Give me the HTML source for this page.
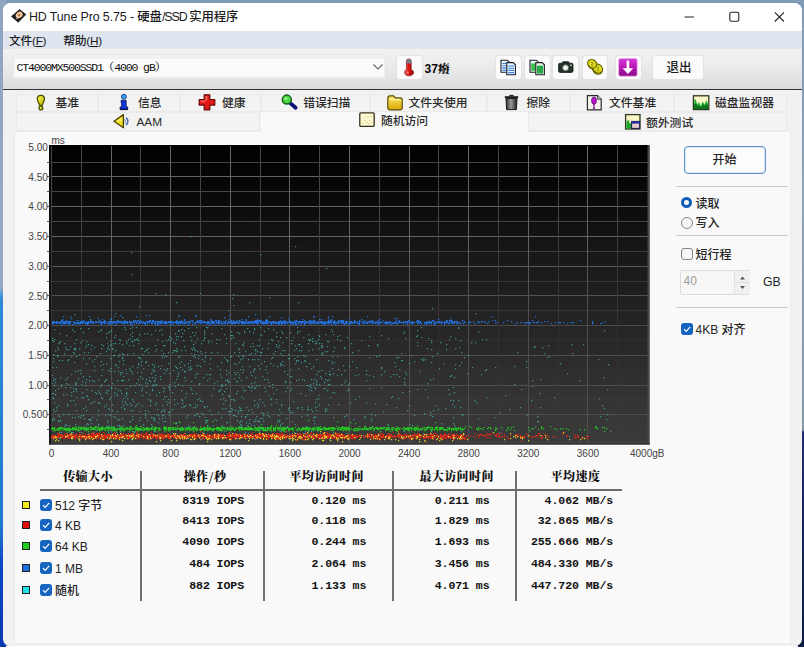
<!DOCTYPE html>
<html lang="zh-CN">
<head>
<meta charset="utf-8">
<title>HD Tune Pro 5.75 - 硬盘/SSD 实用程序</title>
<style>
html,body{margin:0;padding:0;}
body{width:804px;height:665px;overflow:hidden;background:#fff;position:relative;
 font-family:"Liberation Sans","Noto Sans CJK SC",sans-serif;font-size:12px;color:#1a1a1a;line-height:16px;font-weight:500;}
.abs{position:absolute;}
#desk{left:0;top:0;width:804px;height:646px;
 background:linear-gradient(to right,#8fa6bf 0,#8fa6bf 100%);}
#deskL{left:0;top:0;width:6px;height:646.5px;
 background:linear-gradient(to bottom,#8ea6c0 0,#93a9c0 288px,#5a9fdc 293px,#3088d8 299px,#2580d2 420px,#1e78cc 525px,#1660c8 545px,#0c48c4 562px,#0838b0 646px);}
#deskR{left:798px;top:0;width:6px;height:646.5px;
 background:linear-gradient(to bottom,#7f9bb5 0,#8aa2ba 200px,#8496aa 430px,#1e2e70 432px,#16245c 520px,#0c1a44 646px);}
#deskT{left:0;top:0;width:804px;height:8px;background:#7f9bb6;}
#win{left:3px;top:2.5px;width:798.6px;height:643.8px;background:#f1f1f2;border-radius:8px 8px 7px 7px;overflow:hidden;}
#title{left:0;top:0;width:799px;height:29px;background:#fff;}
#title .t{left:26px;top:6.4px;font-size:12.4px;color:#1b1b1b;white-space:nowrap;letter-spacing:-0.1px;}
#menu{left:0;top:28.8px;width:799px;height:18.2px;background:#dfe5ee;}
#menu span{position:absolute;top:1.3px;font-size:11.8px;letter-spacing:-0.3px;white-space:nowrap;color:#1b1b1b;}
#tool{left:0;top:46.8px;width:799px;height:39.7px;background:linear-gradient(to bottom,#f1f1f1 0,#ececec 40%,#dcdcdc 100%);}
#tline{left:0;top:86.1px;width:799px;height:1.4px;background:#333;}
.tbtn{position:absolute;top:7.2px;height:23px;width:24.5px;background:#fbfbfb;border-radius:3px;box-shadow:0 0 0 1px #e3e3e3;}
#combo{left:9.5px;top:6.2px;width:372px;height:22.5px;background:#f1f1f1;border-radius:3px;box-shadow:0 0 0 1px #e6e6e6;}
.mono{font-family:"Liberation Mono","Noto Serif CJK SC",monospace;}
.tab{position:absolute;height:18.5px;background:#f3f3f3;box-shadow:inset 0 0 0 1px #eaeaea;}
.tab span{position:absolute;top:1.6px;font-size:11.8px;white-space:nowrap;color:#2a2a2a;}
#page{left:11.8px;top:129px;width:775.2px;height:511px;background:#f9f9f9;box-shadow:0 0 0 1px #ececec;}
.lbl{position:absolute;font-size:12px;white-space:nowrap;color:#242424;}
.cb{position:absolute;width:12px;height:12px;border-radius:3px;background:#1565c0;}
.cb svg{position:absolute;left:0;top:0;}
.sq{position:absolute;width:6px;height:6px;border:1px solid #222;}
.hd{position:absolute;font-family:"Noto Serif CJK SC","Noto Sans CJK SC",serif;font-weight:900;font-size:12px;letter-spacing:0.4px;white-space:nowrap;color:#111;transform:translateX(-50%);}
.val{position:absolute;font-family:"Liberation Mono",monospace;font-weight:bold;font-size:11.6px;letter-spacing:-0.11px;white-space:pre;color:#111;text-align:right;width:120px;}
.sep{position:absolute;height:1px;background:#c9c9c9;left:676px;width:112px;}
</style>
</head>
<body>
<div id="desk" class="abs"></div>
<div id="deskT" class="abs"></div>
<div id="deskL" class="abs"></div>
<div id="deskR" class="abs"></div>
<div id="win" class="abs">
  <div id="title" class="abs">
    <div class="t abs">HD Tune Pro 5.75 - 硬盘<span style="letter-spacing:-1px">/SSD </span>实用程序</div>
    <svg class="abs" style="left:670px;top:-0.8px" width="129" height="30" viewBox="0 0 129 30">
      <path d="M11.5 15H21" stroke="#222" stroke-width="1.1" fill="none"/>
      <rect x="56.8" y="10.3" width="9" height="9" rx="1.6" fill="none" stroke="#222" stroke-width="1.1"/>
      <path d="M101.8 10.3L111 19.5M111 10.3L101.8 19.5" stroke="#222" stroke-width="1.1" fill="none"/>
    </svg>
  </div>
  <div id="menu" class="abs"><span style="left:6px">文件(<u>F</u>)</span><span style="left:60.3px">帮助(<u>H</u>)</span></div>
  <div id="tool" class="abs">
    <div id="combo" class="abs"><div class="abs" style="left:2px;top:3.5px;width:369px;height:17px;background:#fbfbfb"></div><span class="mono abs" style="left:3.9px;top:4.6px;font-size:11.5px;letter-spacing:-1.14px;color:#111;white-space:pre">CT4000MX500SSD1<span style="letter-spacing:0">（</span>4000 gB<span style="letter-spacing:0">）</span></span>
      <svg class="abs" style="left:359px;top:8px" width="12" height="8" viewBox="0 0 12 8"><path d="M1.5 1.5L6 6L10.5 1.5" fill="none" stroke="#666" stroke-width="1.1"/></svg>
    </div>
    <div class="tbtn" style="left:394px"></div>
    <div class="abs" style="left:421.5px;top:12.2px;font-weight:bold;font-size:12.2px;line-height:14px;white-space:nowrap;font-family:'Liberation Sans','Noto Serif CJK SC',sans-serif;color:#0c0c0c">37<span style="font-size:11.6px;font-weight:900;font-family:'Noto Serif CJK SC',serif">癈</span></div>
    <div class="tbtn" style="left:493px"></div>
    <div class="tbtn" style="left:522px"></div>
    <div class="tbtn" style="left:550.3px"></div>
    <div class="tbtn" style="left:579.5px"></div>
    <div class="tbtn" style="left:613px"></div>
    <div class="tbtn" style="left:650px;width:50px"><span class="abs" style="left:13.5px;top:4px;font-size:12.5px;white-space:nowrap">退出</span></div>
  </div>
  <div id="tline" class="abs"></div>
  <!-- tabs row 1 -->
  <div class="tab" style="left:13.2px;top:91px;width:81.8px"><span style="left:39.3px">基准</span></div>
  <div class="tab" style="left:95px;top:91px;width:81.5px"><span style="left:40px">信息</span></div>
  <div class="tab" style="left:176.5px;top:91px;width:81px"><span style="left:42.5px">健康</span></div>
  <div class="tab" style="left:257.5px;top:91px;width:109px"><span style="left:42.7px">错误扫描</span></div>
  <div class="tab" style="left:366.5px;top:91px;width:117px"><span style="left:39px">文件夹使用</span></div>
  <div class="tab" style="left:483.5px;top:91px;width:83.5px"><span style="left:40px">擦除</span></div>
  <div class="tab" style="left:567px;top:91px;width:104px"><span style="left:39px">文件基准</span></div>
  <div class="tab" style="left:671px;top:91px;width:113px"><span style="left:41px">磁盘监视器</span></div>
  <!-- tabs row 2 -->
  <div class="tab" style="left:13.2px;top:109.5px;width:244.3px;height:19px"><span style="left:120.3px;top:1.6px">AAM</span></div>
  <div class="tab" style="left:524.5px;top:109.5px;width:259.5px;height:19px"><span style="left:118.5px;top:3.1px">额外测试</span></div>
  <div id="page" class="abs"></div>
  <div class="tab" style="left:257.5px;top:109.5px;width:267px;height:21px;background:#f9f9f9;box-shadow:none"><span style="left:120.4px;top:0.9px">随机访问</span></div>
</div>
<svg class="abs" style="left:10px;top:8px" width="18" height="16" viewBox="0 0 18 16">
 <path d="M1.6 8.4L9.6 1.6L15.8 6.6L8.2 14.2Z" fill="#1c1c1c" stroke="#0c0c0c" stroke-width="0.8" stroke-linejoin="round"/>
 <ellipse cx="9.2" cy="7" rx="3.7" ry="3" fill="#f3c393" transform="rotate(-38 9.2 7)"/>
 <circle cx="9.2" cy="7" r="1" fill="#8a5a38"/>
 <path d="M6 11.2L8.6 8.2" stroke="#d0d0d0" stroke-width="0.9"/>
</svg>

<svg class="abs" style="left:0;top:0;pointer-events:none" width="804" height="92" viewBox="0 0 804 92">
 <defs>
  <linearGradient id="gth" x1="0" y1="0" x2="1" y2="0"><stop offset="0" stop-color="#ff5a5a"/><stop offset="0.5" stop-color="#e01010"/><stop offset="1" stop-color="#8a0808"/></linearGradient>
  <linearGradient id="gmg" x1="0" y1="0" x2="0" y2="1"><stop offset="0" stop-color="#d838d8"/><stop offset="0.5" stop-color="#b818b4"/><stop offset="1" stop-color="#8a0c88"/></linearGradient>
 </defs>
 <!-- thermometer -->
 <g>
  <path d="M406.4 61.2C406.4 59.6 407.4 59 408.8 59C410.2 59 411.2 59.6 411.2 61.2V69.4C412.8 70.2 413.6 71.4 413.6 72.6C413.6 74.6 411.6 75.8 408.8 75.8C406 75.8 404.6 74.6 404.6 72.6C404.6 71.4 405.2 70.2 406.4 69.4Z" fill="url(#gth)" stroke="#6a1010" stroke-width="0.6"/>
  <path d="M406.6 61.2C406.6 59.8 407.4 59.2 408.8 59.2C410.2 59.2 411 59.8 411 61.2V63.4H406.6Z" fill="#6f7f86"/>
  <circle cx="407.8" cy="72.4" r="1" fill="#ffb0a0" opacity="0.8"/>
 </g>
 <!-- copy text (blue) -->
 <g>
  <path d="M501 60.2H507.4L509.6 62.4V72.2H501Z" fill="#eef4ff" stroke="#1a2030" stroke-width="1.1"/>
  <path d="M502.4 63.5H508M502.4 65.7H508M502.4 67.9H508M502.4 70.1H508" stroke="#3a86e0" stroke-width="1.1"/>
  <path d="M506.8 62.6H513.2L515.4 64.8V74.8H506.8Z" fill="#eef4ff" stroke="#1a2030" stroke-width="1.1"/>
  <path d="M508.2 66H514M508.2 68.2H514M508.2 70.4H514M508.2 72.6H514" stroke="#3a86e0" stroke-width="1.1"/>
 </g>
 <!-- copy image (green) -->
 <g>
  <path d="M530 60.2H536.4L538.6 62.4V72.2H530Z" fill="#eef8ee" stroke="#1a2030" stroke-width="1.1"/>
  <rect x="531.2" y="63.4" width="6.2" height="7.4" fill="#38c050"/>
  <path d="M535.8 62.6H542.2L544.4 64.8V74.8H535.8Z" fill="#eef8ee" stroke="#2a1a28" stroke-width="1.1"/>
  <rect x="537" y="65.6" width="6.2" height="8" fill="#2aa848"/>
 </g>
 <!-- camera -->
 <g>
  <path d="M561.4 63.4L563 61.2H568.4L570 63.4Z" fill="#1c2a22" />
  <rect x="558.6" y="63.2" width="14.4" height="9.2" rx="1.4" fill="#24332a" stroke="#101812" stroke-width="0.8"/>
  <circle cx="565.6" cy="67.8" r="3" fill="#f4f8f4" stroke="#56685c" stroke-width="0.9"/>
  <rect x="570" y="64.6" width="1.8" height="1.4" fill="#b8c8b8"/>
 </g>
 <!-- coins -->
 <g stroke="#5c5a00" stroke-width="1.1">
  <ellipse cx="592.6" cy="64.8" rx="4.8" ry="4" fill="#c4c010" transform="rotate(35 592.6 64.8)"/>
  <ellipse cx="597.4" cy="69.8" rx="5" ry="4.2" fill="#b8b40c" transform="rotate(35 597.4 69.8)"/>
  <ellipse cx="597.8" cy="68.6" rx="5" ry="4.2" fill="#dcd820" transform="rotate(35 597.8 68.6)"/>
  <ellipse cx="592.2" cy="63.8" rx="4.8" ry="4" fill="#dcd820" transform="rotate(35 592.2 63.8)"/>
 </g>
 <path d="M591 62.6c1.4-1 2.6 0.8 1.2 1.6c-1.4 0.8-0.2 2.4 1.2 1.4M596.8 67.4c1.4-1 2.6 0.8 1.2 1.6c-1.4 0.8-0.2 2.4 1.2 1.4" fill="none" stroke="#7a7a08" stroke-width="0.9"/>
 <!-- download arrow -->
 <g>
  <rect x="618.6" y="58.4" width="18.6" height="17.8" rx="1.8" fill="url(#gmg)" stroke="#f0b8f0" stroke-width="0.8"/>
  <path d="M626.6 60.6H629.2V68.2H633.2L627.9 74L622.6 68.2H626.6Z" fill="#fff"/>
 </g>
</svg>

<svg class="abs" style="left:0;top:0;pointer-events:none" width="804" height="140" viewBox="0 0 804 140">
 <defs>
  <linearGradient id="gy" x1="0" y1="0" x2="1" y2="1"><stop offset="0" stop-color="#ffff50"/><stop offset="1" stop-color="#b4ae00"/></linearGradient>
  <linearGradient id="gfold" x1="0" y1="0" x2="0" y2="1"><stop offset="0" stop-color="#ffe96a"/><stop offset="1" stop-color="#d9a800"/></linearGradient>
  <linearGradient id="gtrash" x1="0" y1="0" x2="1" y2="0"><stop offset="0" stop-color="#2a2a2a"/><stop offset="0.45" stop-color="#9a9a9a"/><stop offset="1" stop-color="#1a1a1a"/></linearGradient>
  <linearGradient id="gmag" x1="0" y1="0" x2="0" y2="1"><stop offset="0" stop-color="#e040e0"/><stop offset="1" stop-color="#90108c"/></linearGradient>
 </defs>
 <!-- 基准: yellow exclamation -->
 <g transform="translate(40.9,102.6)">
  <path d="M0 -7.2C2.6 -7.2 3.8 -5.6 3.5 -3.4C3.2 -0.8 1.7 1 1.2 2.8H-1.2C-1.7 1 -3.2 -0.8 -3.5 -3.4C-3.8 -5.6 -2.6 -7.2 0 -7.2Z" fill="url(#gy)" stroke="#4e4e00" stroke-width="1.3"/>
  <circle cx="0" cy="5.4" r="1.9" fill="url(#gy)" stroke="#4e4e00" stroke-width="1.3"/>
 </g>
 <!-- 信息: blue i -->
 <g transform="translate(123.9,102)">
  <circle cx="0" cy="-5.2" r="2.5" fill="#3a9cf0" stroke="#0a3a90" stroke-width="0.9"/>
  <path d="M-2.8 -1.6H2.2V5H3.8V7.6H-3.8V5H-2.2V0.8H-2.8Z" fill="#1038e0" stroke="#06145a" stroke-width="0.9"/>
  <path d="M-3.8 7.2H3.8" stroke="#0a0a30" stroke-width="1"/>
 </g>
 <!-- 健康: red cross -->
 <g transform="translate(207,102.3)">
  <path d="M-2.8 -7.5H2.8V-2.8H7.8V2.8H2.8V7.5H-2.8V2.8H-7.8V-2.8H-2.8Z" fill="#e01818" stroke="#6a0808" stroke-width="1.2" stroke-linejoin="round"/>
  <path d="M-1.8 -6.2H0.4V-1.8H-1.8ZM-6.4 -1.8H-1.8V0H-6.4Z" fill="#ff7060" opacity="0.8"/>
 </g>
 <!-- 错误扫描: magnifier -->
 <g>
  <path d="M290.6 103.4L295.6 107.8" stroke="#0c1478" stroke-width="3.8" stroke-linecap="round"/>
  <circle cx="286.8" cy="99.6" r="4.5" fill="#4cd840" stroke="#14601a" stroke-width="1.5"/>
  <circle cx="285.8" cy="98.6" r="1.7" fill="#b0f8a0" opacity="0.75"/>
 </g>
 <!-- 文件夹使用: folder -->
 <g>
  <path d="M387.8 98.2C387.8 96.6 388.6 95.8 390 95.8H393.6L395.4 97.8H400.2C401.6 97.8 402.2 98.6 402.2 100V108C402.2 109.2 401.6 109.8 400.4 109.8H389.6C388.4 109.8 387.8 109.2 387.8 108Z" fill="url(#gfold)" stroke="#5a4a08" stroke-width="1.2"/>
  <path d="M389.2 99.6H400.8" stroke="#fff6b0" stroke-width="1"/>
 </g>
 <!-- 擦除: trash -->
 <g>
  <path d="M506 98.4H517L516.4 109.6H506.6Z" fill="url(#gtrash)" stroke="#1a1a1a" stroke-width="1"/>
  <path d="M504.8 97.2H518.2" stroke="#1c1c1c" stroke-width="2"/>
  <path d="M509.4 95.6H513.6" stroke="#1c1c1c" stroke-width="1.4"/>
 </g>
 <!-- 文件基准: doc with purple ! -->
 <g>
  <path d="M587.4 95.6H597.6L601.2 99.2V109.8H587.4Z" fill="#f4f4ec" stroke="#2a2a2a" stroke-width="1.2"/>
  <path d="M597.6 95.6V99.2H601.2" fill="#d8d8d0" stroke="#2a2a2a" stroke-width="0.9"/>
  <ellipse cx="594" cy="100.6" rx="2.5" ry="3.6" fill="#b418c8" stroke="#5a0870" stroke-width="0.7"/>
  <path d="M594 104V106.4" stroke="#8a10a0" stroke-width="1.6"/>
  <circle cx="594" cy="108" r="1.1" fill="#7a0a90"/>
 </g>
 <!-- 磁盘监视器 -->
 <g>
  <rect x="693.4" y="95.8" width="15.4" height="13.8" fill="#fbf6c8" stroke="#2a3a1a" stroke-width="1.3"/>
  <path d="M694.2 109V100.4L695.6 99L697.2 104.6L699 102L700.6 106L702.6 101.6L704.4 104.6L706.2 100.6L708 103.4V109Z" fill="#22b032"/>
  <path d="M694.2 109V104.6L696 103.4L697.6 106.8L699.2 105L701 107.6L703 104.2L704.8 106.4L706.4 104L708 105.6V109Z" fill="#0c701c"/>
 </g>
 <!-- AAM speaker -->
 <g>
  <path d="M126 117.6C128.6 119.6 128.6 123 126 125" fill="none" stroke="#4a6ab0" stroke-width="1.5"/>
  <path d="M124.6 119.4C125.8 120.6 125.8 122.2 124.6 123.4" fill="none" stroke="#8a9ac0" stroke-width="1.2"/>
  <path d="M114 121.2L123.4 114.6V127.8Z" fill="#f2e21e" stroke="#4a4000" stroke-width="1.3" stroke-linejoin="round"/>
  <path d="M116.4 121.2L122 117.4V121.2Z" fill="#fff68a" opacity="0.7"/>
 </g>
 <!-- 随机访问 -->
 <g>
  <rect x="359.8" y="112.8" width="14.4" height="13.6" rx="1" fill="#fdfbd2" stroke="#33301e" stroke-width="1.3"/>
  <path d="M362.5 123.5h1M364.5 120.5h1M363.5 118.5h1M366.5 122.5h1M367.5 117.5h1M369.5 120.5h1M370.5 116.5h1M368.5 124h1M371.5 122.5h1M365.5 116h1" stroke="#c8a860" stroke-width="1"/>
 </g>
 <!-- 额外测试 -->
 <g>
  <rect x="625.6" y="114.6" width="14.4" height="14.4" fill="#fbf6c8" stroke="#2a3a1a" stroke-width="1.3"/>
  <path d="M626.4 128.4V122L628.2 119.6L630 124L631.6 121.6V128.4Z" fill="#1aa82a"/>
  <rect x="631.6" y="121.4" width="8" height="7" fill="#e8c8d0" stroke="#1a1a50" stroke-width="1"/>
  <rect x="631.6" y="121.4" width="8" height="2.2" fill="#2030a0"/>
 </g>
</svg>

<svg id="chart" width="804" height="665" viewBox="0 0 804 665" style="position:absolute;left:0;top:0">
<defs><linearGradient id="bg" gradientUnits="userSpaceOnUse" x1="0" y1="145" x2="0" y2="444.5"><stop offset="0.0000" stop-color="#000000"/><stop offset="0.1836" stop-color="#0a0a0a"/><stop offset="0.3506" stop-color="#171717"/><stop offset="0.5042" stop-color="#1f1f1f"/><stop offset="0.6010" stop-color="#252525"/><stop offset="0.6511" stop-color="#272727"/><stop offset="0.8013" stop-color="#313131"/><stop offset="0.9983" stop-color="#3b3b3b"/></linearGradient><linearGradient id="gmaj" gradientUnits="userSpaceOnUse" x1="0" y1="145" x2="0" y2="444.5"><stop offset="0.0000" stop-color="#666666"/><stop offset="0.3038" stop-color="#626262"/><stop offset="0.4040" stop-color="#585858"/><stop offset="0.5042" stop-color="#525252"/><stop offset="0.6010" stop-color="#4c4c4c"/><stop offset="0.8013" stop-color="#4e4e4e"/><stop offset="0.9983" stop-color="#505050"/></linearGradient><linearGradient id="gmin" gradientUnits="userSpaceOnUse" x1="0" y1="145" x2="0" y2="444.5"><stop offset="0.0000" stop-color="#464646"/><stop offset="0.2571" stop-color="#444444"/><stop offset="0.3573" stop-color="#3a3a3a"/><stop offset="0.5543" stop-color="#363636"/><stop offset="0.6511" stop-color="#303030"/><stop offset="0.7513" stop-color="#333333"/><stop offset="0.9983" stop-color="#3d3d3d"/></linearGradient></defs>
<rect x="49" y="145" width="600.5" height="299.5" fill="url(#bg)"/>
<path d="M51 429.5H648" stroke="#3b3b3b"/>
<path d="M51 414.5H648" stroke="#4f4f4f"/>
<path d="M51 399.5H648" stroke="#373737"/>
<path d="M51 385.5H648" stroke="#4e4e4e"/>
<path d="M51 370.5H648" stroke="#333333"/>
<path d="M51 355.5H648" stroke="#4d4d4d"/>
<path d="M51 340.5H648" stroke="#303030"/>
<path d="M51 325.5H648" stroke="#4c4c4c"/>
<path d="M51 310.5H648" stroke="#363636"/>
<path d="M51 295.5H648" stroke="#525252"/>
<path d="M51 281.5H648" stroke="#383838"/>
<path d="M51 266.5H648" stroke="#585858"/>
<path d="M51 251.5H648" stroke="#3a3a3a"/>
<path d="M51 236.5H648" stroke="#626262"/>
<path d="M51 221.5H648" stroke="#444444"/>
<path d="M51 206.5H648" stroke="#636363"/>
<path d="M51 191.5H648" stroke="#454545"/>
<path d="M51 176.5H648" stroke="#656565"/>
<path d="M51 162.5H648" stroke="#464646"/>
<path d="M81.5 146v297.4M140.5 146v297.4M200.5 146v297.4M260.5 146v297.4M319.5 146v297.4M379.5 146v297.4M438.5 146v297.4M498.5 146v297.4M558.5 146v297.4M617.5 146v297.4" stroke="url(#gmin)" stroke-width="1" fill="none"/>
<path d="M111.5 146v297.4M170.5 146v297.4M230.5 146v297.4M289.5 146v297.4M349.5 146v297.4M409.5 146v297.4M468.5 146v297.4M528.5 146v297.4M587.5 146v297.4" stroke="url(#gmaj)" stroke-width="1" fill="none"/>
<path d="M50 145V444.5" stroke="#0a0a0a" stroke-width="2" fill="none" opacity="0.7"/>
<path d="M51.5 146v297" stroke="url(#gmin)" stroke-width="1" fill="none"/>
<path d="M51 442.8H648" stroke="#4c4c4c" stroke-width="1" fill="none"/>
<path d="M648.5 145V444.5" stroke="#474747" stroke-width="2" fill="none"/>
<path d="M49 443.9H649.5" stroke="#2e2e2e" stroke-width="1.2" fill="none"/>
<path d="M47 429.5H49.5M47 414.5H49.5M47 399.5H49.5M47 385.5H49.5M47 370.5H49.5M47 355.5H49.5M47 340.5H49.5M47 325.5H49.5M47 310.5H49.5M47 295.5H49.5M47 281.5H49.5M47 266.5H49.5M47 251.5H49.5M47 236.5H49.5M47 221.5H49.5M47 206.5H49.5M47 191.5H49.5M47 176.5H49.5M47 162.5H49.5" stroke="#555" stroke-width="1" fill="none"/>
<g fill="none" stroke-width="1.25">
<path d="M52 338.5h1.25M52 340.5h1.25M52 367.5h1.25M52 375.5h1.25M52 383.5h1.25M52 393.5h1.25M52 397.5h1.25M52 419.5h1.25M52 420.5h1.25M52 437.5h1.25M53 341.5h1.25M53 354.5h1.25M53 358.5h1.25M53 361.5h1.25M53 378.5h1.25M53 380.5h1.25M53 393.5h1.25M53 398.5h1.25M53 409.5h1.25M53 417.5h1.25M53 439.5h1.25M54 329.5h1.25M54 339.5h1.25M54 385.5h1.25M54 402.5h1.25M54 411.5h1.25M54 419.5h1.25M55 350.5h1.25M55 379.5h1.25M55 382.5h1.25M55 390.5h1.25M55 394.5h1.25M56 367.5h1.25M56 407.5h1.25M56 410.5h1.25M57 347.5h1.25M57 355.5h1.25M57 356.5h1.25M57 428.5h1.25M58 343.5h1.25M58 349.5h1.25M58 388.5h1.25M58 405.5h1.25M58 415.5h1.25M58 420.5h1.25M58 421.5h1.25M59 333.5h1.25M59 342.5h1.25M59 360.5h1.25M59 416.5h1.25M59 429.5h1.25M59 432.5h1.25M59 438.5h1.25M60 341.5h1.25M60 377.5h1.25M60 420.5h1.25M61 384.5h1.25M61 386.5h1.25M61 432.5h1.25M61 436.5h1.25M62 360.5h1.25M63 394.5h1.25M63 414.5h1.25M64 343.5h1.25M64 353.5h1.25M64 426.5h1.25M65 347.5h1.25M65 379.5h1.25M65 387.5h1.25M65 424.5h1.25M66 335.5h1.25M66 349.5h1.25M66 383.5h1.25M66 394.5h1.25M66 425.5h1.25M67 360.5h1.25M67 377.5h1.25M67 404.5h1.25M67 405.5h1.25M67 432.5h1.25M68 349.5h1.25M68 359.5h1.25M68 384.5h1.25M68 414.5h1.25M69 425.5h1.25M69 431.5h1.25M70 346.5h1.25M70 387.5h1.25M70 400.5h1.25M70 437.5h1.25M71 356.5h1.25M71 374.5h1.25M71 392.5h1.25M71 395.5h1.25M71 432.5h1.25M72 329.5h1.25M72 417.5h1.25M72 432.5h1.25M73 352.5h1.25M73 388.5h1.25M73 391.5h1.25M73 400.5h1.25M74 314.5h1.25M74 331.5h1.25M74 343.5h1.25M74 348.5h1.25M74 349.5h1.25M74 353.5h1.25M74 362.5h1.25M75 348.5h1.25M75 349.5h1.25M75 371.5h1.25M75 382.5h1.25M75 384.5h1.25M75 389.5h1.25M75 404.5h1.25M75 417.5h1.25M75 424.5h1.25M76 339.5h1.25M76 356.5h1.25M76 383.5h1.25M76 388.5h1.25M76 391.5h1.25M76 397.5h1.25M76 410.5h1.25M76 428.5h1.25M77 430.5h1.25M78 370.5h1.25M78 378.5h1.25M78 416.5h1.25M79 348.5h1.25M79 354.5h1.25M79 430.5h1.25M80 328.5h1.25M80 342.5h1.25M80 370.5h1.25M80 373.5h1.25M80 417.5h1.25M81 384.5h1.25M81 397.5h1.25M81 415.5h1.25M81 432.5h1.25M82 340.5h1.25M82 381.5h1.25M82 392.5h1.25M82 433.5h1.25M83 332.5h1.25M83 358.5h1.25M83 376.5h1.25M83 397.5h1.25M83 408.5h1.25M83 415.5h1.25M84 352.5h1.25M84 418.5h1.25M84 426.5h1.25M85 347.5h1.25M85 382.5h1.25M85 385.5h1.25M85 406.5h1.25M85 430.5h1.25M85 438.5h1.25M86 341.5h1.25M86 345.5h1.25M86 363.5h1.25M86 379.5h1.25M86 389.5h1.25M86 395.5h1.25M86 410.5h1.25M86 424.5h1.25M86 438.5h1.25M87 396.5h1.25M87 423.5h1.25M87 436.5h1.25M88 328.5h1.25M88 344.5h1.25M88 352.5h1.25M88 399.5h1.25M88 419.5h1.25M88 424.5h1.25M88 433.5h1.25M89 358.5h1.25M89 376.5h1.25M89 380.5h1.25M89 419.5h1.25M90 319.5h1.25M90 403.5h1.25M90 419.5h1.25M90 420.5h1.25M91 345.5h1.25M91 349.5h1.25M91 390.5h1.25M91 423.5h1.25M91 427.5h1.25M92 361.5h1.25M92 380.5h1.25M92 402.5h1.25M92 417.5h1.25M92 428.5h1.25M93 432.5h1.25M94 347.5h1.25M94 359.5h1.25M94 366.5h1.25M94 370.5h1.25M94 381.5h1.25M94 401.5h1.25M94 428.5h1.25M94 435.5h1.25M95 392.5h1.25M96 356.5h1.25M96 393.5h1.25M96 419.5h1.25M96 426.5h1.25M96 430.5h1.25M96 438.5h1.25M98 331.5h1.25M98 379.5h1.25M98 390.5h1.25M98 402.5h1.25M98 410.5h1.25M98 415.5h1.25M98 424.5h1.25M98 425.5h1.25M99 392.5h1.25M99 403.5h1.25M99 435.5h1.25M100 330.5h1.25M100 353.5h1.25M100 365.5h1.25M100 386.5h1.25M100 394.5h1.25M101 329.5h1.25M101 344.5h1.25M101 348.5h1.25M101 361.5h1.25M101 375.5h1.25M101 384.5h1.25M101 397.5h1.25M101 427.5h1.25M101 429.5h1.25M102 369.5h1.25M102 398.5h1.25M103 345.5h1.25M103 364.5h1.25M104 381.5h1.25M104 406.5h1.25M105 380.5h1.25M105 392.5h1.25M105 415.5h1.25M106 333.5h1.25M106 337.5h1.25M106 351.5h1.25M106 363.5h1.25M106 379.5h1.25M106 390.5h1.25M106 404.5h1.25M106 426.5h1.25M107 343.5h1.25M107 348.5h1.25M107 393.5h1.25M107 420.5h1.25M107 422.5h1.25M107 437.5h1.25M108 332.5h1.25M108 346.5h1.25M108 370.5h1.25M108 385.5h1.25M108 390.5h1.25M108 408.5h1.25M108 414.5h1.25M108 425.5h1.25M108 426.5h1.25M108 430.5h1.25M108 432.5h1.25M108 434.5h1.25M109 331.5h1.25M109 349.5h1.25M109 399.5h1.25M109 409.5h1.25M110 341.5h1.25M110 344.5h1.25M110 358.5h1.25M110 368.5h1.25M110 371.5h1.25M110 397.5h1.25M110 415.5h1.25M110 430.5h1.25M110 435.5h1.25M111 330.5h1.25M111 345.5h1.25M111 387.5h1.25M111 388.5h1.25M112 348.5h1.25M112 349.5h1.25M112 383.5h1.25M112 404.5h1.25M112 410.5h1.25M112 436.5h1.25M113 343.5h1.25M113 355.5h1.25M113 416.5h1.25M114 337.5h1.25M114 355.5h1.25M114 371.5h1.25M114 392.5h1.25M114 395.5h1.25M114 427.5h1.25M114 429.5h1.25M115 313.5h1.25M115 335.5h1.25M115 343.5h1.25M115 350.5h1.25M115 364.5h1.25M115 388.5h1.25M115 417.5h1.25M115 428.5h1.25M116 365.5h1.25M116 393.5h1.25M116 432.5h1.25M116 438.5h1.25M117 380.5h1.25M117 395.5h1.25M117 411.5h1.25M117 419.5h1.25M117 425.5h1.25M118 356.5h1.25M118 367.5h1.25M118 371.5h1.25M118 390.5h1.25M119 339.5h1.25M119 343.5h1.25M119 354.5h1.25M119 361.5h1.25M119 419.5h1.25M119 425.5h1.25M119 426.5h1.25M120 340.5h1.25M120 372.5h1.25M120 374.5h1.25M120 390.5h1.25M120 428.5h1.25M120 431.5h1.25M120 434.5h1.25M121 380.5h1.25M121 393.5h1.25M121 407.5h1.25M122 317.5h1.25M122 344.5h1.25M122 353.5h1.25M122 357.5h1.25M122 358.5h1.25M122 372.5h1.25M122 380.5h1.25M122 401.5h1.25M122 418.5h1.25M123 354.5h1.25M123 360.5h1.25M123 364.5h1.25M123 376.5h1.25M123 380.5h1.25M123 398.5h1.25M123 405.5h1.25M123 425.5h1.25M124 327.5h1.25M124 408.5h1.25M124 409.5h1.25M125 329.5h1.25M125 369.5h1.25M125 396.5h1.25M125 401.5h1.25M125 403.5h1.25M126 341.5h1.25M126 343.5h1.25M126 373.5h1.25M126 388.5h1.25M126 392.5h1.25M126 393.5h1.25M126 394.5h1.25M126 436.5h1.25M127 354.5h1.25M127 398.5h1.25M127 404.5h1.25M128 339.5h1.25M128 379.5h1.25M128 435.5h1.25M129 345.5h1.25M129 368.5h1.25M129 421.5h1.25M129 431.5h1.25M130 328.5h1.25M130 334.5h1.25M130 338.5h1.25M130 370.5h1.25M130 386.5h1.25M130 403.5h1.25M130 410.5h1.25M130 421.5h1.25M131 252.5h1.25M131 274.5h1.25M131 341.5h1.25M131 371.5h1.25M131 405.5h1.25M131 439.5h1.25M132 327.5h1.25M132 332.5h1.25M132 336.5h1.25M132 341.5h1.25M132 366.5h1.25M132 373.5h1.25M132 399.5h1.25M132 410.5h1.25M132 416.5h1.25M132 419.5h1.25M132 431.5h1.25M133 345.5h1.25M133 353.5h1.25M133 401.5h1.25M133 431.5h1.25M133 437.5h1.25M134 339.5h1.25M134 340.5h1.25M134 385.5h1.25M134 432.5h1.25M135 392.5h1.25M135 406.5h1.25M135 429.5h1.25M135 431.5h1.25M136 327.5h1.25M136 339.5h1.25M136 383.5h1.25M136 404.5h1.25M137 338.5h1.25M137 367.5h1.25M137 372.5h1.25M138 340.5h1.25M138 343.5h1.25M138 357.5h1.25M138 363.5h1.25M138 364.5h1.25M138 379.5h1.25M138 403.5h1.25M138 429.5h1.25M139 306.5h1.25M139 334.5h1.25M139 357.5h1.25M139 384.5h1.25M139 411.5h1.25M139 420.5h1.25M139 435.5h1.25M140 358.5h1.25M140 376.5h1.25M140 417.5h1.25M141 348.5h1.25M141 361.5h1.25M141 365.5h1.25M141 372.5h1.25M141 385.5h1.25M141 390.5h1.25M141 428.5h1.25M142 348.5h1.25M142 354.5h1.25M142 378.5h1.25M142 388.5h1.25M142 395.5h1.25M142 405.5h1.25M143 368.5h1.25M143 424.5h1.25M144 333.5h1.25M144 351.5h1.25M145 362.5h1.25M145 382.5h1.25M145 410.5h1.25M145 413.5h1.25M145 415.5h1.25M145 417.5h1.25M145 429.5h1.25M146 349.5h1.25M146 350.5h1.25M146 361.5h1.25M146 379.5h1.25M146 386.5h1.25M146 392.5h1.25M146 429.5h1.25M146 436.5h1.25M147 333.5h1.25M147 383.5h1.25M147 420.5h1.25M148 348.5h1.25M148 352.5h1.25M148 365.5h1.25M148 399.5h1.25M148 411.5h1.25M149 377.5h1.25M149 380.5h1.25M149 394.5h1.25M150 381.5h1.25M150 400.5h1.25M150 401.5h1.25M150 405.5h1.25M151 334.5h1.25M151 373.5h1.25M151 417.5h1.25M151 424.5h1.25M152 364.5h1.25M152 369.5h1.25M152 377.5h1.25M152 385.5h1.25M152 389.5h1.25M152 390.5h1.25M153 371.5h1.25M153 384.5h1.25M153 417.5h1.25M153 419.5h1.25M154 365.5h1.25M154 367.5h1.25M154 370.5h1.25M154 380.5h1.25M154 381.5h1.25M154 418.5h1.25M154 420.5h1.25M154 431.5h1.25M155 293.5h1.25M155 330.5h1.25M155 345.5h1.25M155 351.5h1.25M155 375.5h1.25M155 378.5h1.25M155 385.5h1.25M155 404.5h1.25M155 428.5h1.25M155 431.5h1.25M156 349.5h1.25M156 384.5h1.25M156 395.5h1.25M156 402.5h1.25M156 414.5h1.25M157 339.5h1.25M157 409.5h1.25M158 366.5h1.25M158 415.5h1.25M158 422.5h1.25M158 433.5h1.25M159 330.5h1.25M159 392.5h1.25M159 418.5h1.25M160 368.5h1.25M160 376.5h1.25M160 379.5h1.25M160 435.5h1.25M161 329.5h1.25M161 350.5h1.25M161 355.5h1.25M161 365.5h1.25M161 411.5h1.25M162 334.5h1.25M162 341.5h1.25M162 357.5h1.25M162 405.5h1.25M162 410.5h1.25M162 415.5h1.25M162 418.5h1.25M162 437.5h1.25M163 345.5h1.25M163 353.5h1.25M163 387.5h1.25M163 391.5h1.25M163 399.5h1.25M163 415.5h1.25M163 421.5h1.25M164 345.5h1.25M164 356.5h1.25M164 369.5h1.25M164 373.5h1.25M164 388.5h1.25M164 396.5h1.25M164 409.5h1.25M164 411.5h1.25M165 294.5h1.25M165 417.5h1.25M165 421.5h1.25M166 340.5h1.25M166 356.5h1.25M166 370.5h1.25M166 396.5h1.25M166 401.5h1.25M167 368.5h1.25M167 404.5h1.25M168 339.5h1.25M168 352.5h1.25M168 363.5h1.25M168 387.5h1.25M168 399.5h1.25M168 412.5h1.25M168 429.5h1.25M169 336.5h1.25M169 373.5h1.25M169 384.5h1.25M169 386.5h1.25M169 389.5h1.25M169 402.5h1.25M169 411.5h1.25M169 415.5h1.25M170 337.5h1.25M170 340.5h1.25M170 429.5h1.25M171 338.5h1.25M172 352.5h1.25M172 392.5h1.25M172 409.5h1.25M173 342.5h1.25M173 350.5h1.25M173 370.5h1.25M174 350.5h1.25M174 382.5h1.25M174 399.5h1.25M174 404.5h1.25M175 333.5h1.25M175 343.5h1.25M175 350.5h1.25M175 366.5h1.25M175 386.5h1.25M175 434.5h1.25M176 302.5h1.25M176 336.5h1.25M176 339.5h1.25M176 348.5h1.25M176 351.5h1.25M176 367.5h1.25M176 379.5h1.25M176 422.5h1.25M176 423.5h1.25M176 429.5h1.25M177 350.5h1.25M177 368.5h1.25M177 376.5h1.25M177 403.5h1.25M177 428.5h1.25M178 316.5h1.25M178 330.5h1.25M178 331.5h1.25M178 336.5h1.25M178 357.5h1.25M178 372.5h1.25M178 374.5h1.25M178 384.5h1.25M179 356.5h1.25M179 363.5h1.25M180 367.5h1.25M181 329.5h1.25M181 336.5h1.25M181 350.5h1.25M181 361.5h1.25M181 390.5h1.25M181 399.5h1.25M181 407.5h1.25M182 333.5h1.25M182 369.5h1.25M182 385.5h1.25M182 400.5h1.25M182 403.5h1.25M182 434.5h1.25M183 340.5h1.25M183 406.5h1.25M184 330.5h1.25M184 346.5h1.25M184 365.5h1.25M184 371.5h1.25M184 377.5h1.25M184 406.5h1.25M185 350.5h1.25M185 371.5h1.25M185 380.5h1.25M185 397.5h1.25M185 405.5h1.25M185 427.5h1.25M185 433.5h1.25M186 393.5h1.25M186 417.5h1.25M186 437.5h1.25M187 415.5h1.25M188 328.5h1.25M188 363.5h1.25M188 367.5h1.25M188 425.5h1.25M188 438.5h1.25M189 369.5h1.25M189 404.5h1.25M190 236.5h1.25M190 336.5h1.25M190 360.5h1.25M190 366.5h1.25M190 369.5h1.25M190 387.5h1.25M190 405.5h1.25M190 426.5h1.25M191 340.5h1.25M191 348.5h1.25M191 353.5h1.25M191 368.5h1.25M191 381.5h1.25M191 389.5h1.25M192 332.5h1.25M192 349.5h1.25M192 393.5h1.25M193 344.5h1.25M193 347.5h1.25M193 356.5h1.25M193 407.5h1.25M193 439.5h1.25M194 335.5h1.25M194 349.5h1.25M194 354.5h1.25M194 415.5h1.25M194 426.5h1.25M195 332.5h1.25M195 342.5h1.25M195 350.5h1.25M195 357.5h1.25M195 374.5h1.25M195 377.5h1.25M195 404.5h1.25M195 407.5h1.25M195 438.5h1.25M196 327.5h1.25M196 365.5h1.25M196 393.5h1.25M196 413.5h1.25M196 429.5h1.25M197 338.5h1.25M197 351.5h1.25M197 373.5h1.25M197 399.5h1.25M197 405.5h1.25M197 414.5h1.25M198 355.5h1.25M198 358.5h1.25M198 365.5h1.25M198 434.5h1.25M198 435.5h1.25M199 383.5h1.25M199 384.5h1.25M199 398.5h1.25M199 416.5h1.25M200 293.5h1.25M200 351.5h1.25M200 366.5h1.25M200 400.5h1.25M200 439.5h1.25M201 343.5h1.25M201 353.5h1.25M201 413.5h1.25M202 359.5h1.25M202 401.5h1.25M202 432.5h1.25M202 438.5h1.25M203 340.5h1.25M203 377.5h1.25M203 414.5h1.25M203 429.5h1.25M204 330.5h1.25M204 332.5h1.25M204 334.5h1.25M204 337.5h1.25M204 338.5h1.25M204 361.5h1.25M204 406.5h1.25M204 407.5h1.25M205 352.5h1.25M205 355.5h1.25M205 357.5h1.25M205 417.5h1.25M205 420.5h1.25M205 422.5h1.25M206 327.5h1.25M206 374.5h1.25M206 420.5h1.25M206 422.5h1.25M206 428.5h1.25M207 327.5h1.25M207 380.5h1.25M207 406.5h1.25M207 425.5h1.25M207 426.5h1.25M207 429.5h1.25M208 340.5h1.25M208 342.5h1.25M209 363.5h1.25M209 374.5h1.25M209 378.5h1.25M209 410.5h1.25M209 427.5h1.25M209 438.5h1.25M210 358.5h1.25M210 368.5h1.25M210 374.5h1.25M211 333.5h1.25M211 341.5h1.25M211 352.5h1.25M211 395.5h1.25M211 414.5h1.25M213 388.5h1.25M213 425.5h1.25M214 383.5h1.25M214 419.5h1.25M216 339.5h1.25M216 343.5h1.25M216 420.5h1.25M217 352.5h1.25M217 366.5h1.25M217 381.5h1.25M218 391.5h1.25M218 412.5h1.25M218 437.5h1.25M219 339.5h1.25M219 390.5h1.25M220 369.5h1.25M220 374.5h1.25M220 389.5h1.25M220 399.5h1.25M220 429.5h1.25M221 328.5h1.25M221 362.5h1.25M221 377.5h1.25M221 384.5h1.25M221 386.5h1.25M221 417.5h1.25M222 385.5h1.25M222 394.5h1.25M222 408.5h1.25M222 425.5h1.25M223 398.5h1.25M223 403.5h1.25M224 334.5h1.25M224 357.5h1.25M224 391.5h1.25M224 427.5h1.25M224 431.5h1.25M224 437.5h1.25M225 380.5h1.25M225 384.5h1.25M225 400.5h1.25M225 408.5h1.25M226 338.5h1.25M226 343.5h1.25M226 359.5h1.25M226 370.5h1.25M226 374.5h1.25M226 388.5h1.25M226 422.5h1.25M227 360.5h1.25M227 361.5h1.25M227 379.5h1.25M227 380.5h1.25M227 422.5h1.25M228 310.5h1.25M228 372.5h1.25M228 381.5h1.25M228 382.5h1.25M228 395.5h1.25M228 411.5h1.25M229 396.5h1.25M229 405.5h1.25M229 411.5h1.25M229 414.5h1.25M229 432.5h1.25M230 335.5h1.25M230 356.5h1.25M231 331.5h1.25M231 335.5h1.25M231 338.5h1.25M231 356.5h1.25M231 399.5h1.25M231 408.5h1.25M231 411.5h1.25M232 298.5h1.25M232 335.5h1.25M232 409.5h1.25M233 294.5h1.25M233 305.5h1.25M233 337.5h1.25M233 399.5h1.25M233 415.5h1.25M234 352.5h1.25M234 363.5h1.25M234 372.5h1.25M234 378.5h1.25M234 400.5h1.25M234 415.5h1.25M235 343.5h1.25M235 374.5h1.25M235 410.5h1.25M235 427.5h1.25M235 436.5h1.25M236 364.5h1.25M236 381.5h1.25M236 393.5h1.25M236 416.5h1.25M236 438.5h1.25M237 332.5h1.25M237 372.5h1.25M237 381.5h1.25M237 391.5h1.25M237 420.5h1.25M238 348.5h1.25M238 356.5h1.25M238 410.5h1.25M238 412.5h1.25M238 438.5h1.25M239 333.5h1.25M239 349.5h1.25M239 352.5h1.25M239 362.5h1.25M239 374.5h1.25M239 377.5h1.25M239 407.5h1.25M239 422.5h1.25M240 359.5h1.25M240 369.5h1.25M240 408.5h1.25M240 410.5h1.25M240 421.5h1.25M240 424.5h1.25M241 380.5h1.25M241 396.5h1.25M241 410.5h1.25M241 416.5h1.25M241 420.5h1.25M241 425.5h1.25M241 426.5h1.25M242 344.5h1.25M242 355.5h1.25M242 358.5h1.25M242 366.5h1.25M242 372.5h1.25M242 387.5h1.25M243 342.5h1.25M243 345.5h1.25M243 356.5h1.25M243 369.5h1.25M243 390.5h1.25M243 398.5h1.25M244 331.5h1.25M244 332.5h1.25M245 351.5h1.25M245 390.5h1.25M245 416.5h1.25M245 417.5h1.25M245 432.5h1.25M246 377.5h1.25M246 407.5h1.25M246 422.5h1.25M247 328.5h1.25M247 414.5h1.25M247 425.5h1.25M248 359.5h1.25M248 386.5h1.25M248 410.5h1.25M248 433.5h1.25M249 302.5h1.25M249 331.5h1.25M249 354.5h1.25M249 366.5h1.25M249 387.5h1.25M249 419.5h1.25M249 423.5h1.25M249 429.5h1.25M249 435.5h1.25M250 346.5h1.25M250 372.5h1.25M250 428.5h1.25M251 353.5h1.25M251 375.5h1.25M251 383.5h1.25M251 387.5h1.25M251 390.5h1.25M251 409.5h1.25M251 425.5h1.25M251 434.5h1.25M252 343.5h1.25M252 359.5h1.25M252 386.5h1.25M252 412.5h1.25M253 332.5h1.25M253 346.5h1.25M253 371.5h1.25M253 421.5h1.25M253 436.5h1.25M253 437.5h1.25M254 328.5h1.25M254 329.5h1.25M254 359.5h1.25M254 368.5h1.25M254 369.5h1.25M254 382.5h1.25M254 388.5h1.25M254 400.5h1.25M254 405.5h1.25M254 425.5h1.25M254 438.5h1.25M255 349.5h1.25M255 350.5h1.25M255 353.5h1.25M255 377.5h1.25M255 387.5h1.25M255 419.5h1.25M255 421.5h1.25M255 439.5h1.25M256 385.5h1.25M256 416.5h1.25M256 434.5h1.25M257 345.5h1.25M257 351.5h1.25M257 403.5h1.25M257 407.5h1.25M257 420.5h1.25M257 438.5h1.25M258 359.5h1.25M258 365.5h1.25M258 405.5h1.25M258 421.5h1.25M259 339.5h1.25M259 345.5h1.25M259 368.5h1.25M259 385.5h1.25M259 399.5h1.25M259 421.5h1.25M259 426.5h1.25M259 430.5h1.25M259 432.5h1.25M260 254.5h1.25M260 327.5h1.25M260 334.5h1.25M260 352.5h1.25M260 355.5h1.25M260 418.5h1.25M260 435.5h1.25M261 335.5h1.25M261 352.5h1.25M261 363.5h1.25M261 412.5h1.25M261 427.5h1.25M262 348.5h1.25M262 376.5h1.25M262 402.5h1.25M262 418.5h1.25M262 428.5h1.25M263 413.5h1.25M263 415.5h1.25M263 421.5h1.25M263 429.5h1.25M264 331.5h1.25M264 361.5h1.25M264 379.5h1.25M264 387.5h1.25M264 405.5h1.25M265 369.5h1.25M265 391.5h1.25M265 427.5h1.25M266 366.5h1.25M267 348.5h1.25M267 372.5h1.25M267 379.5h1.25M267 412.5h1.25M267 415.5h1.25M268 328.5h1.25M268 343.5h1.25M268 382.5h1.25M268 395.5h1.25M268 434.5h1.25M269 297.5h1.25M269 386.5h1.25M269 416.5h1.25M270 363.5h1.25M270 399.5h1.25M271 339.5h1.25M271 358.5h1.25M271 398.5h1.25M271 404.5h1.25M271 434.5h1.25M271 438.5h1.25M272 340.5h1.25M272 357.5h1.25M272 384.5h1.25M272 387.5h1.25M273 329.5h1.25M273 353.5h1.25M273 365.5h1.25M273 393.5h1.25M274 435.5h1.25M274 436.5h1.25M275 351.5h1.25M275 436.5h1.25M276 332.5h1.25M276 336.5h1.25M276 344.5h1.25M276 346.5h1.25M276 389.5h1.25M276 399.5h1.25M276 402.5h1.25M276 434.5h1.25M277 366.5h1.25M277 420.5h1.25M277 422.5h1.25M278 341.5h1.25M278 347.5h1.25M278 415.5h1.25M279 345.5h1.25M279 409.5h1.25M279 421.5h1.25M279 430.5h1.25M279 436.5h1.25M280 337.5h1.25M280 353.5h1.25M280 363.5h1.25M280 365.5h1.25M280 424.5h1.25M280 431.5h1.25M281 331.5h1.25M281 364.5h1.25M281 404.5h1.25M281 405.5h1.25M281 412.5h1.25M281 430.5h1.25M281 434.5h1.25M282 333.5h1.25M282 342.5h1.25M282 350.5h1.25M282 355.5h1.25M282 361.5h1.25M282 423.5h1.25M283 365.5h1.25M283 427.5h1.25M283 429.5h1.25M284 350.5h1.25M284 371.5h1.25M285 381.5h1.25M285 382.5h1.25M285 391.5h1.25M286 337.5h1.25M286 418.5h1.25M286 431.5h1.25M287 374.5h1.25M287 387.5h1.25M287 426.5h1.25M288 354.5h1.25M288 358.5h1.25M288 408.5h1.25M288 436.5h1.25M288 438.5h1.25M289 358.5h1.25M289 407.5h1.25M289 410.5h1.25M289 437.5h1.25M290 332.5h1.25M290 369.5h1.25M290 376.5h1.25M290 382.5h1.25M290 390.5h1.25M290 412.5h1.25M291 340.5h1.25M291 343.5h1.25M291 376.5h1.25M291 388.5h1.25M292 412.5h1.25M292 421.5h1.25M292 433.5h1.25M292 438.5h1.25M293 337.5h1.25M293 401.5h1.25M294 350.5h1.25M294 358.5h1.25M294 432.5h1.25M295 246.5h1.25M295 345.5h1.25M295 363.5h1.25M295 424.5h1.25M296 348.5h1.25M296 360.5h1.25M296 361.5h1.25M296 380.5h1.25M297 327.5h1.25M297 331.5h1.25M297 333.5h1.25M297 356.5h1.25M297 407.5h1.25M297 408.5h1.25M297 430.5h1.25M297 433.5h1.25M297 437.5h1.25M298 302.5h1.25M298 344.5h1.25M298 360.5h1.25M298 368.5h1.25M298 379.5h1.25M299 331.5h1.25M299 344.5h1.25M299 350.5h1.25M300 393.5h1.25M301 346.5h1.25M301 350.5h1.25M301 362.5h1.25M301 407.5h1.25M301 416.5h1.25M301 429.5h1.25M302 379.5h1.25M302 409.5h1.25M302 439.5h1.25M303 337.5h1.25M303 355.5h1.25M303 427.5h1.25M303 433.5h1.25M304 360.5h1.25M304 380.5h1.25M304 433.5h1.25M305 356.5h1.25M305 361.5h1.25M305 395.5h1.25M305 431.5h1.25M305 433.5h1.25M305 439.5h1.25M306 366.5h1.25M306 426.5h1.25M307 385.5h1.25M307 406.5h1.25M307 409.5h1.25M307 415.5h1.25M307 434.5h1.25M308 334.5h1.25M308 339.5h1.25M308 343.5h1.25M308 350.5h1.25M308 409.5h1.25M308 429.5h1.25M308 431.5h1.25M309 340.5h1.25M309 363.5h1.25M309 386.5h1.25M309 389.5h1.25M309 435.5h1.25M310 339.5h1.25M310 384.5h1.25M310 434.5h1.25M311 368.5h1.25M311 379.5h1.25M311 387.5h1.25M311 390.5h1.25M311 409.5h1.25M311 430.5h1.25M311 431.5h1.25M312 338.5h1.25M312 341.5h1.25M312 349.5h1.25M312 411.5h1.25M312 439.5h1.25M313 341.5h1.25M313 366.5h1.25M313 383.5h1.25M313 417.5h1.25M313 420.5h1.25M314 379.5h1.25M314 387.5h1.25M314 417.5h1.25M314 423.5h1.25M314 435.5h1.25M315 343.5h1.25M315 388.5h1.25M315 402.5h1.25M315 407.5h1.25M315 416.5h1.25M316 341.5h1.25M316 343.5h1.25M316 359.5h1.25M316 374.5h1.25M316 380.5h1.25M316 382.5h1.25M316 384.5h1.25M316 399.5h1.25M316 410.5h1.25M317 406.5h1.25M317 427.5h1.25M317 429.5h1.25M317 430.5h1.25M318 335.5h1.25M318 339.5h1.25M318 348.5h1.25M318 371.5h1.25M318 395.5h1.25M318 398.5h1.25M319 336.5h1.25M319 343.5h1.25M319 384.5h1.25M319 404.5h1.25M320 376.5h1.25M320 429.5h1.25M320 433.5h1.25M321 343.5h1.25M321 345.5h1.25M321 347.5h1.25M321 353.5h1.25M321 370.5h1.25M321 378.5h1.25M322 346.5h1.25M322 352.5h1.25M322 354.5h1.25M323 388.5h1.25M324 382.5h1.25M325 334.5h1.25M325 351.5h1.25M325 373.5h1.25M325 379.5h1.25M325 388.5h1.25M325 408.5h1.25M325 410.5h1.25M325 411.5h1.25M326 268.5h1.25M327 341.5h1.25M327 346.5h1.25M327 351.5h1.25M327 380.5h1.25M327 390.5h1.25M327 409.5h1.25M328 341.5h1.25M328 360.5h1.25M328 384.5h1.25M328 404.5h1.25M329 371.5h1.25M329 374.5h1.25M329 379.5h1.25M329 384.5h1.25M329 439.5h1.25M330 374.5h1.25M330 397.5h1.25M331 329.5h1.25M331 361.5h1.25M332 331.5h1.25M332 356.5h1.25M332 363.5h1.25M332 368.5h1.25M332 392.5h1.25M332 434.5h1.25M333 334.5h1.25M333 351.5h1.25M333 373.5h1.25M333 417.5h1.25M333 432.5h1.25M333 437.5h1.25M334 347.5h1.25M334 362.5h1.25M334 392.5h1.25M337 336.5h1.25M337 339.5h1.25M337 356.5h1.25M337 375.5h1.25M338 369.5h1.25M338 404.5h1.25M339 335.5h1.25M340 340.5h1.25M341 374.5h1.25M341 384.5h1.25M342 438.5h1.25M343 365.5h1.25M344 347.5h1.25M344 348.5h1.25M344 370.5h1.25M344 382.5h1.25M344 416.5h1.25M345 380.5h1.25M346 415.5h1.25M346 433.5h1.25M347 337.5h1.25M347 390.5h1.25M348 384.5h1.25M348 389.5h1.25M349 366.5h1.25M349 383.5h1.25M349 437.5h1.25M350 402.5h1.25M351 343.5h1.25M352 352.5h1.25M352 361.5h1.25M353 419.5h1.25M355 375.5h1.25M355 399.5h1.25M355 437.5h1.25M356 367.5h1.25M358 350.5h1.25M358 374.5h1.25M359 396.5h1.25M361 340.5h1.25M364 416.5h1.25M365 417.5h1.25M365 435.5h1.25M366 370.5h1.25M366 374.5h1.25M366 380.5h1.25M366 402.5h1.25M368 345.5h1.25M369 336.5h1.25M369 357.5h1.25M369 375.5h1.25M369 388.5h1.25M369 428.5h1.25M369 437.5h1.25M371 414.5h1.25M371 418.5h1.25M371 420.5h1.25M373 376.5h1.25M375 403.5h1.25M375 415.5h1.25M376 356.5h1.25M377 344.5h1.25M377 345.5h1.25M378 433.5h1.25M379 355.5h1.25M380 431.5h1.25M381 335.5h1.25M381 367.5h1.25M381 368.5h1.25M381 374.5h1.25M381 387.5h1.25M383 411.5h1.25M384 371.5h1.25M386 404.5h1.25M388 338.5h1.25M388 425.5h1.25M388 427.5h1.25M390 376.5h1.25M391 397.5h1.25M392 396.5h1.25M392 427.5h1.25M393 374.5h1.25M394 362.5h1.25M395 366.5h1.25M396 357.5h1.25M396 374.5h1.25M396 407.5h1.25M396 426.5h1.25M398 357.5h1.25M398 398.5h1.25M399 369.5h1.25M399 376.5h1.25M401 353.5h1.25M401 360.5h1.25M402 360.5h1.25M402 392.5h1.25M403 333.5h1.25M403 430.5h1.25M404 331.5h1.25M404 378.5h1.25M404 382.5h1.25M404 384.5h1.25M404 431.5h1.25M405 338.5h1.25M405 372.5h1.25M406 374.5h1.25M407 410.5h1.25M409 363.5h1.25M409 391.5h1.25M409 405.5h1.25M409 424.5h1.25M411 355.5h1.25M414 361.5h1.25M414 415.5h1.25M414 427.5h1.25M414 435.5h1.25M416 336.5h1.25M417 330.5h1.25M417 335.5h1.25M417 342.5h1.25M417 345.5h1.25M417 389.5h1.25M418 428.5h1.25M418 430.5h1.25M419 371.5h1.25M421 327.5h1.25M421 337.5h1.25M421 359.5h1.25M423 358.5h1.25M423 360.5h1.25M423 433.5h1.25M424 413.5h1.25M425 359.5h1.25M425 389.5h1.25M427 348.5h1.25M427 383.5h1.25M427 397.5h1.25M428 338.5h1.25M430 379.5h1.25M430 412.5h1.25M430 415.5h1.25M431 340.5h1.25M431 342.5h1.25M431 349.5h1.25M431 362.5h1.25M431 431.5h1.25M432 308.5h1.25M432 356.5h1.25M432 416.5h1.25M433 378.5h1.25M433 410.5h1.25M435 405.5h1.25M437 353.5h1.25M438 409.5h1.25M439 368.5h1.25M440 342.5h1.25M441 423.5h1.25M442 437.5h1.25M443 363.5h1.25M445 408.5h1.25M446 344.5h1.25M446 349.5h1.25M448 389.5h1.25M449 339.5h1.25M449 394.5h1.25M450 336.5h1.25M450 376.5h1.25M450 400.5h1.25M451 375.5h1.25M452 404.5h1.25M453 387.5h1.25M453 400.5h1.25M453 417.5h1.25M453 423.5h1.25M454 377.5h1.25M454 392.5h1.25M454 406.5h1.25M454 425.5h1.25M455 338.5h1.25M455 348.5h1.25M455 364.5h1.25M455 368.5h1.25M458 327.5h1.25M458 328.5h1.25M458 400.5h1.25M459 347.5h1.25M459 365.5h1.25M460 340.5h1.25M460 407.5h1.25M460 437.5h1.25M461 352.5h1.25M461 362.5h1.25M461 431.5h1.25M462 414.5h1.25M462 415.5h1.25M464 357.5h1.25M467 373.5h1.25M468 355.5h1.25M471 342.5h1.25M472 367.5h1.25M474 400.5h1.25M475 313.5h1.25M475 342.5h1.25M476 402.5h1.25M478 331.5h1.25M478 418.5h1.25M481 374.5h1.25M482 339.5h1.25M485 370.5h1.25M486 339.5h1.25M486 369.5h1.25M486 397.5h1.25M494 417.5h1.25M495 367.5h1.25M499 412.5h1.25M499 432.5h1.25M505 395.5h1.25M509 409.5h1.25M514 366.5h1.25M514 384.5h1.25M517 352.5h1.25M520 407.5h1.25M521 389.5h1.25M521 437.5h1.25M526 361.5h1.25M526 367.5h1.25M527 415.5h1.25M531 400.5h1.25M532 380.5h1.25M532 386.5h1.25M534 346.5h1.25M534 347.5h1.25M535 426.5h1.25M537 416.5h1.25M537 421.5h1.25M538 421.5h1.25M539 393.5h1.25M540 379.5h1.25M540 407.5h1.25M542 347.5h1.25M544 353.5h1.25M547 357.5h1.25M548 345.5h1.25M549 356.5h1.25M554 397.5h1.25M560 363.5h1.25M567 373.5h1.25M569 436.5h1.25M571 344.5h1.25M572 353.5h1.25M579 380.5h1.25M583 344.5h1.25M598 359.5h1.25M599 398.5h1.25M600 416.5h1.25M602 405.5h1.25M603 377.5h1.25M604 330.5h1.25M604 408.5h1.25M606 419.5h1.25M607 389.5h1.25M607 414.5h1.25M608 364.5h1.25M610 431.5h1.25" stroke="#42b8ae" opacity="0.72"/>
<path d="M52 321.5h1.25M52 322.5h1.25M52 323.5h1.25M53 321.5h1.25M53 322.5h1.25M53 323.5h1.25M54 321.5h1.25M54 322.5h1.25M55 322.5h1.25M56 321.5h1.25M56 322.5h1.25M56 323.5h1.25M57 321.5h1.25M57 322.5h1.25M58 322.5h1.25M59 322.5h1.25M59 323.5h1.25M60 321.5h1.25M60 322.5h1.25M60 323.5h1.25M61 320.5h1.25M61 321.5h1.25M61 325.5h1.25M62 319.5h1.25M62 320.5h1.25M62 322.5h1.25M62 323.5h1.25M63 316.5h1.25M63 321.5h1.25M63 322.5h1.25M63 323.5h1.25M64 321.5h1.25M64 322.5h1.25M64 323.5h1.25M65 321.5h1.25M65 322.5h1.25M65 323.5h1.25M66 320.5h1.25M66 322.5h1.25M66 323.5h1.25M67 321.5h1.25M68 321.5h1.25M68 322.5h1.25M68 323.5h1.25M69 321.5h1.25M69 322.5h1.25M69 323.5h1.25M69 324.5h1.25M70 316.5h1.25M70 321.5h1.25M70 322.5h1.25M71 318.5h1.25M72 324.5h1.25M73 321.5h1.25M73 322.5h1.25M74 322.5h1.25M74 323.5h1.25M75 322.5h1.25M75 323.5h1.25M76 320.5h1.25M76 323.5h1.25M77 322.5h1.25M77 323.5h1.25M78 320.5h1.25M78 322.5h1.25M78 323.5h1.25M79 322.5h1.25M79 323.5h1.25M80 321.5h1.25M80 322.5h1.25M80 323.5h1.25M81 321.5h1.25M81 322.5h1.25M82 321.5h1.25M82 322.5h1.25M82 323.5h1.25M83 320.5h1.25M83 321.5h1.25M83 322.5h1.25M84 322.5h1.25M85 322.5h1.25M85 323.5h1.25M86 321.5h1.25M86 322.5h1.25M86 323.5h1.25M87 322.5h1.25M87 323.5h1.25M87 324.5h1.25M88 321.5h1.25M88 322.5h1.25M88 323.5h1.25M89 316.5h1.25M89 322.5h1.25M90 320.5h1.25M90 321.5h1.25M90 322.5h1.25M91 321.5h1.25M91 322.5h1.25M92 321.5h1.25M92 322.5h1.25M93 322.5h1.25M93 323.5h1.25M95 321.5h1.25M95 322.5h1.25M96 321.5h1.25M96 322.5h1.25M98 318.5h1.25M98 321.5h1.25M98 322.5h1.25M99 320.5h1.25M99 321.5h1.25M100 322.5h1.25M100 323.5h1.25M101 321.5h1.25M101 322.5h1.25M101 323.5h1.25M101 324.5h1.25M102 319.5h1.25M102 322.5h1.25M103 321.5h1.25M103 322.5h1.25M104 320.5h1.25M104 321.5h1.25M104 322.5h1.25M104 323.5h1.25M105 321.5h1.25M105 322.5h1.25M106 322.5h1.25M107 323.5h1.25M108 321.5h1.25M108 323.5h1.25M109 321.5h1.25M109 322.5h1.25M109 324.5h1.25M110 319.5h1.25M110 321.5h1.25M110 322.5h1.25M110 323.5h1.25M111 318.5h1.25M111 321.5h1.25M111 322.5h1.25M112 322.5h1.25M112 323.5h1.25M113 321.5h1.25M113 322.5h1.25M114 316.5h1.25M114 321.5h1.25M114 322.5h1.25M115 322.5h1.25M115 324.5h1.25M116 321.5h1.25M116 323.5h1.25M117 320.5h1.25M117 321.5h1.25M117 322.5h1.25M118 321.5h1.25M119 321.5h1.25M119 322.5h1.25M120 315.5h1.25M120 321.5h1.25M120 322.5h1.25M121 321.5h1.25M121 322.5h1.25M122 321.5h1.25M122 323.5h1.25M123 322.5h1.25M123 323.5h1.25M124 320.5h1.25M124 321.5h1.25M124 322.5h1.25M124 323.5h1.25M125 321.5h1.25M125 322.5h1.25M126 321.5h1.25M126 322.5h1.25M127 321.5h1.25M127 322.5h1.25M127 323.5h1.25M129 321.5h1.25M129 322.5h1.25M130 321.5h1.25M130 322.5h1.25M130 323.5h1.25M130 324.5h1.25M131 322.5h1.25M132 322.5h1.25M132 324.5h1.25M133 320.5h1.25M133 321.5h1.25M133 322.5h1.25M134 321.5h1.25M134 323.5h1.25M135 320.5h1.25M135 321.5h1.25M136 316.5h1.25M136 321.5h1.25M136 322.5h1.25M136 323.5h1.25M137 320.5h1.25M138 320.5h1.25M138 322.5h1.25M138 323.5h1.25M139 321.5h1.25M139 322.5h1.25M140 320.5h1.25M140 322.5h1.25M141 321.5h1.25M141 322.5h1.25M142 323.5h1.25M143 321.5h1.25M143 322.5h1.25M144 322.5h1.25M144 323.5h1.25M145 322.5h1.25M145 323.5h1.25M145 324.5h1.25M146 315.5h1.25M146 321.5h1.25M147 321.5h1.25M147 322.5h1.25M147 323.5h1.25M148 321.5h1.25M149 315.5h1.25M149 320.5h1.25M149 321.5h1.25M149 322.5h1.25M150 320.5h1.25M150 321.5h1.25M151 322.5h1.25M151 323.5h1.25M152 320.5h1.25M152 321.5h1.25M152 322.5h1.25M152 323.5h1.25M153 320.5h1.25M153 321.5h1.25M154 322.5h1.25M154 323.5h1.25M155 321.5h1.25M155 322.5h1.25M155 323.5h1.25M155 324.5h1.25M156 321.5h1.25M157 321.5h1.25M157 322.5h1.25M157 323.5h1.25M157 324.5h1.25M158 321.5h1.25M158 324.5h1.25M159 321.5h1.25M159 322.5h1.25M159 323.5h1.25M160 321.5h1.25M160 322.5h1.25M160 323.5h1.25M161 320.5h1.25M161 321.5h1.25M161 323.5h1.25M162 321.5h1.25M162 322.5h1.25M163 322.5h1.25M164 321.5h1.25M164 322.5h1.25M164 323.5h1.25M165 321.5h1.25M165 322.5h1.25M165 323.5h1.25M166 321.5h1.25M166 322.5h1.25M166 323.5h1.25M167 322.5h1.25M168 321.5h1.25M168 322.5h1.25M169 321.5h1.25M169 322.5h1.25M170 321.5h1.25M170 322.5h1.25M170 324.5h1.25M171 321.5h1.25M171 322.5h1.25M171 324.5h1.25M172 321.5h1.25M172 322.5h1.25M173 322.5h1.25M173 323.5h1.25M174 322.5h1.25M175 321.5h1.25M175 322.5h1.25M176 320.5h1.25M176 321.5h1.25M176 322.5h1.25M176 323.5h1.25M177 321.5h1.25M177 322.5h1.25M178 321.5h1.25M178 322.5h1.25M178 323.5h1.25M178 324.5h1.25M179 315.5h1.25M179 321.5h1.25M179 322.5h1.25M180 321.5h1.25M180 322.5h1.25M180 323.5h1.25M181 320.5h1.25M181 321.5h1.25M181 322.5h1.25M182 322.5h1.25M182 323.5h1.25M183 321.5h1.25M183 323.5h1.25M184 319.5h1.25M184 320.5h1.25M184 322.5h1.25M184 323.5h1.25M185 321.5h1.25M185 323.5h1.25M186 322.5h1.25M187 321.5h1.25M187 322.5h1.25M188 322.5h1.25M188 324.5h1.25M189 321.5h1.25M189 322.5h1.25M189 323.5h1.25M190 321.5h1.25M191 320.5h1.25M192 320.5h1.25M192 321.5h1.25M192 324.5h1.25M193 322.5h1.25M194 323.5h1.25M195 315.5h1.25M195 322.5h1.25M195 323.5h1.25M196 316.5h1.25M196 321.5h1.25M197 320.5h1.25M197 321.5h1.25M197 322.5h1.25M198 321.5h1.25M198 322.5h1.25M199 320.5h1.25M199 322.5h1.25M200 320.5h1.25M200 322.5h1.25M200 323.5h1.25M201 320.5h1.25M201 321.5h1.25M201 322.5h1.25M202 322.5h1.25M203 321.5h1.25M203 322.5h1.25M204 321.5h1.25M204 322.5h1.25M205 322.5h1.25M206 322.5h1.25M206 323.5h1.25M207 321.5h1.25M207 322.5h1.25M207 323.5h1.25M208 321.5h1.25M208 322.5h1.25M208 323.5h1.25M209 321.5h1.25M209 324.5h1.25M210 319.5h1.25M210 322.5h1.25M210 323.5h1.25M211 320.5h1.25M211 321.5h1.25M211 322.5h1.25M212 321.5h1.25M212 322.5h1.25M212 323.5h1.25M213 321.5h1.25M213 322.5h1.25M213 323.5h1.25M214 321.5h1.25M214 322.5h1.25M215 320.5h1.25M215 324.5h1.25M216 320.5h1.25M216 321.5h1.25M216 322.5h1.25M217 322.5h1.25M217 323.5h1.25M218 320.5h1.25M218 321.5h1.25M218 322.5h1.25M218 323.5h1.25M219 320.5h1.25M219 321.5h1.25M219 322.5h1.25M219 323.5h1.25M221 321.5h1.25M221 322.5h1.25M221 323.5h1.25M222 323.5h1.25M223 321.5h1.25M223 323.5h1.25M224 317.5h1.25M224 321.5h1.25M224 323.5h1.25M225 321.5h1.25M225 322.5h1.25M225 323.5h1.25M226 320.5h1.25M227 322.5h1.25M227 323.5h1.25M228 321.5h1.25M228 322.5h1.25M229 315.5h1.25M229 319.5h1.25M229 321.5h1.25M229 322.5h1.25M230 322.5h1.25M231 320.5h1.25M231 321.5h1.25M231 322.5h1.25M231 323.5h1.25M232 322.5h1.25M232 323.5h1.25M233 320.5h1.25M233 321.5h1.25M233 322.5h1.25M233 323.5h1.25M234 322.5h1.25M234 323.5h1.25M235 321.5h1.25M235 322.5h1.25M235 323.5h1.25M236 321.5h1.25M236 322.5h1.25M237 320.5h1.25M237 322.5h1.25M238 322.5h1.25M238 323.5h1.25M239 320.5h1.25M239 321.5h1.25M239 322.5h1.25M240 321.5h1.25M241 319.5h1.25M241 321.5h1.25M241 322.5h1.25M241 323.5h1.25M242 321.5h1.25M242 322.5h1.25M242 323.5h1.25M243 321.5h1.25M243 322.5h1.25M243 323.5h1.25M244 321.5h1.25M244 322.5h1.25M244 323.5h1.25M245 319.5h1.25M245 321.5h1.25M245 323.5h1.25M246 320.5h1.25M246 322.5h1.25M247 322.5h1.25M247 323.5h1.25M248 316.5h1.25M248 321.5h1.25M248 322.5h1.25M248 323.5h1.25M249 322.5h1.25M250 321.5h1.25M250 322.5h1.25M250 323.5h1.25M251 321.5h1.25M251 322.5h1.25M252 321.5h1.25M252 323.5h1.25M253 321.5h1.25M253 322.5h1.25M254 321.5h1.25M254 322.5h1.25M254 323.5h1.25M255 314.5h1.25M255 320.5h1.25M255 321.5h1.25M255 322.5h1.25M256 320.5h1.25M256 321.5h1.25M256 322.5h1.25M256 323.5h1.25M257 319.5h1.25M257 320.5h1.25M257 321.5h1.25M257 322.5h1.25M257 323.5h1.25M258 320.5h1.25M258 321.5h1.25M258 323.5h1.25M259 320.5h1.25M259 321.5h1.25M260 321.5h1.25M260 322.5h1.25M261 320.5h1.25M261 321.5h1.25M261 323.5h1.25M262 322.5h1.25M262 323.5h1.25M263 321.5h1.25M263 322.5h1.25M263 323.5h1.25M264 322.5h1.25M264 323.5h1.25M265 320.5h1.25M265 321.5h1.25M265 322.5h1.25M265 323.5h1.25M266 319.5h1.25M266 320.5h1.25M266 321.5h1.25M266 322.5h1.25M266 323.5h1.25M267 320.5h1.25M267 321.5h1.25M267 322.5h1.25M267 323.5h1.25M268 322.5h1.25M269 316.5h1.25M269 321.5h1.25M270 321.5h1.25M270 322.5h1.25M270 323.5h1.25M271 322.5h1.25M271 323.5h1.25M271 324.5h1.25M272 321.5h1.25M272 322.5h1.25M273 321.5h1.25M273 322.5h1.25M273 323.5h1.25M274 322.5h1.25M275 321.5h1.25M275 322.5h1.25M275 323.5h1.25M276 322.5h1.25M276 323.5h1.25M277 322.5h1.25M278 321.5h1.25M278 322.5h1.25M278 323.5h1.25M278 324.5h1.25M279 321.5h1.25M279 322.5h1.25M279 323.5h1.25M280 320.5h1.25M280 322.5h1.25M281 317.5h1.25M281 321.5h1.25M281 322.5h1.25M281 323.5h1.25M281 324.5h1.25M282 321.5h1.25M282 322.5h1.25M282 323.5h1.25M283 321.5h1.25M283 322.5h1.25M284 320.5h1.25M284 321.5h1.25M284 322.5h1.25M284 323.5h1.25M285 321.5h1.25M285 322.5h1.25M285 323.5h1.25M286 321.5h1.25M287 322.5h1.25M287 323.5h1.25M288 318.5h1.25M288 321.5h1.25M289 320.5h1.25M289 322.5h1.25M290 321.5h1.25M290 322.5h1.25M290 323.5h1.25M291 322.5h1.25M291 323.5h1.25M292 321.5h1.25M292 322.5h1.25M292 324.5h1.25M293 322.5h1.25M293 323.5h1.25M294 320.5h1.25M294 322.5h1.25M295 321.5h1.25M295 322.5h1.25M295 323.5h1.25M295 324.5h1.25M296 320.5h1.25M296 321.5h1.25M296 323.5h1.25M296 324.5h1.25M297 321.5h1.25M298 321.5h1.25M298 322.5h1.25M298 323.5h1.25M299 321.5h1.25M299 322.5h1.25M300 321.5h1.25M300 322.5h1.25M300 324.5h1.25M301 321.5h1.25M301 322.5h1.25M301 323.5h1.25M302 319.5h1.25M302 321.5h1.25M302 322.5h1.25M303 321.5h1.25M303 322.5h1.25M304 320.5h1.25M304 322.5h1.25M304 323.5h1.25M304 324.5h1.25M305 321.5h1.25M305 322.5h1.25M305 323.5h1.25M306 321.5h1.25M307 321.5h1.25M307 322.5h1.25M308 322.5h1.25M309 320.5h1.25M309 321.5h1.25M309 322.5h1.25M309 323.5h1.25M310 320.5h1.25M310 321.5h1.25M310 323.5h1.25M311 321.5h1.25M311 322.5h1.25M311 323.5h1.25M312 321.5h1.25M312 322.5h1.25M313 316.5h1.25M313 320.5h1.25M313 321.5h1.25M313 322.5h1.25M313 323.5h1.25M314 316.5h1.25M314 320.5h1.25M314 321.5h1.25M314 322.5h1.25M315 322.5h1.25M315 323.5h1.25M316 322.5h1.25M317 321.5h1.25M317 322.5h1.25M317 323.5h1.25M318 321.5h1.25M318 323.5h1.25M319 319.5h1.25M319 322.5h1.25M320 321.5h1.25M320 322.5h1.25M321 319.5h1.25M321 321.5h1.25M321 322.5h1.25M321 323.5h1.25M322 322.5h1.25M322 323.5h1.25M323 321.5h1.25M323 322.5h1.25M323 323.5h1.25M324 322.5h1.25M324 323.5h1.25M324 324.5h1.25M325 321.5h1.25M325 322.5h1.25M325 323.5h1.25M326 322.5h1.25M327 321.5h1.25M327 323.5h1.25M328 316.5h1.25M328 318.5h1.25M328 320.5h1.25M328 321.5h1.25M328 322.5h1.25M328 323.5h1.25M329 321.5h1.25M329 322.5h1.25M329 323.5h1.25M330 320.5h1.25M330 321.5h1.25M330 322.5h1.25M331 319.5h1.25M331 320.5h1.25M331 322.5h1.25M331 324.5h1.25M332 316.5h1.25M332 321.5h1.25M333 321.5h1.25M333 322.5h1.25M333 323.5h1.25M334 320.5h1.25M334 321.5h1.25M334 322.5h1.25M334 323.5h1.25M335 322.5h1.25M335 324.5h1.25M336 322.5h1.25M336 323.5h1.25M337 321.5h1.25M338 320.5h1.25M338 321.5h1.25M338 322.5h1.25M338 323.5h1.25M339 321.5h1.25M339 322.5h1.25M340 320.5h1.25M341 320.5h1.25M341 321.5h1.25M341 322.5h1.25M341 323.5h1.25M342 320.5h1.25M342 321.5h1.25M342 322.5h1.25M343 320.5h1.25M343 321.5h1.25M343 322.5h1.25M343 323.5h1.25M344 323.5h1.25M344 324.5h1.25M345 321.5h1.25M345 322.5h1.25M346 321.5h1.25M346 322.5h1.25M346 323.5h1.25M347 321.5h1.25M347 322.5h1.25M348 324.5h1.25M349 319.5h1.25M349 322.5h1.25M349 323.5h1.25M350 321.5h1.25M350 322.5h1.25M350 323.5h1.25M351 321.5h1.25M351 322.5h1.25M352 322.5h1.25M353 322.5h1.25M353 323.5h1.25M354 320.5h1.25M354 321.5h1.25M354 322.5h1.25M355 321.5h1.25M355 322.5h1.25M356 322.5h1.25M357 321.5h1.25M357 323.5h1.25M358 323.5h1.25M359 320.5h1.25M359 321.5h1.25M359 322.5h1.25M359 323.5h1.25M359 324.5h1.25M361 319.5h1.25M361 321.5h1.25M362 322.5h1.25M363 321.5h1.25M363 322.5h1.25M363 323.5h1.25M364 320.5h1.25M364 322.5h1.25M365 323.5h1.25M366 321.5h1.25M366 322.5h1.25M367 316.5h1.25M367 322.5h1.25M367 323.5h1.25M368 321.5h1.25M369 321.5h1.25M369 322.5h1.25M370 320.5h1.25M370 322.5h1.25M371 321.5h1.25M372 320.5h1.25M372 321.5h1.25M372 322.5h1.25M372 323.5h1.25M373 322.5h1.25M374 322.5h1.25M375 321.5h1.25M375 323.5h1.25M376 322.5h1.25M377 320.5h1.25M377 322.5h1.25M377 323.5h1.25M378 321.5h1.25M378 322.5h1.25M378 324.5h1.25M379 319.5h1.25M379 323.5h1.25M380 321.5h1.25M380 322.5h1.25M381 322.5h1.25M382 322.5h1.25M383 320.5h1.25M384 322.5h1.25M385 322.5h1.25M385 323.5h1.25M386 321.5h1.25M386 322.5h1.25M386 323.5h1.25M387 322.5h1.25M387 323.5h1.25M388 322.5h1.25M389 321.5h1.25M389 322.5h1.25M389 323.5h1.25M390 322.5h1.25M391 322.5h1.25M391 324.5h1.25M392 323.5h1.25M393 322.5h1.25M394 318.5h1.25M394 322.5h1.25M394 323.5h1.25M395 321.5h1.25M395 322.5h1.25M396 318.5h1.25M396 320.5h1.25M396 323.5h1.25M397 322.5h1.25M397 323.5h1.25M398 321.5h1.25M399 320.5h1.25M399 321.5h1.25M399 322.5h1.25M400 322.5h1.25M401 322.5h1.25M402 322.5h1.25M403 321.5h1.25M403 322.5h1.25M403 323.5h1.25M405 321.5h1.25M405 322.5h1.25M406 321.5h1.25M406 322.5h1.25M407 321.5h1.25M407 323.5h1.25M407 324.5h1.25M408 320.5h1.25M408 321.5h1.25M409 322.5h1.25M410 321.5h1.25M411 322.5h1.25M411 323.5h1.25M412 321.5h1.25M412 322.5h1.25M412 323.5h1.25M413 322.5h1.25M414 322.5h1.25M416 321.5h1.25M417 320.5h1.25M417 321.5h1.25M417 322.5h1.25M417 323.5h1.25M418 320.5h1.25M418 321.5h1.25M418 322.5h1.25M419 322.5h1.25M419 323.5h1.25M420 321.5h1.25M420 322.5h1.25M421 323.5h1.25M424 322.5h1.25M424 323.5h1.25M425 322.5h1.25M426 321.5h1.25M426 322.5h1.25M426 323.5h1.25M426 324.5h1.25M427 322.5h1.25M428 321.5h1.25M428 322.5h1.25M429 321.5h1.25M429 322.5h1.25M429 323.5h1.25M430 322.5h1.25M431 321.5h1.25M431 322.5h1.25M431 323.5h1.25M432 320.5h1.25M433 320.5h1.25M433 321.5h1.25M433 323.5h1.25M434 322.5h1.25M434 324.5h1.25M435 321.5h1.25M435 323.5h1.25M436 322.5h1.25M437 321.5h1.25M438 319.5h1.25M438 322.5h1.25M439 321.5h1.25M439 322.5h1.25M440 322.5h1.25M441 321.5h1.25M441 322.5h1.25M441 323.5h1.25M442 322.5h1.25M444 321.5h1.25M444 322.5h1.25M444 323.5h1.25M444 324.5h1.25M445 322.5h1.25M446 320.5h1.25M446 321.5h1.25M446 322.5h1.25M447 320.5h1.25M447 322.5h1.25M448 323.5h1.25M449 320.5h1.25M449 321.5h1.25M449 322.5h1.25M449 323.5h1.25M450 318.5h1.25M450 320.5h1.25M451 320.5h1.25M451 321.5h1.25M451 322.5h1.25M452 321.5h1.25M452 322.5h1.25M452 323.5h1.25M453 322.5h1.25M453 323.5h1.25M454 321.5h1.25M454 322.5h1.25M455 321.5h1.25M456 321.5h1.25M456 323.5h1.25M457 321.5h1.25M457 322.5h1.25M458 323.5h1.25M459 322.5h1.25M460 323.5h1.25M462 320.5h1.25M462 321.5h1.25M463 323.5h1.25M464 321.5h1.25M464 322.5h1.25M468 322.5h1.25M468 323.5h1.25M469 321.5h1.25M470 322.5h1.25M473 321.5h1.25M474 323.5h1.25M477 322.5h1.25M478 321.5h1.25M479 322.5h1.25M481 321.5h1.25M482 321.5h1.25M484 321.5h1.25M485 322.5h1.25M487 323.5h1.25M488 321.5h1.25M491 316.5h1.25M492 320.5h1.25M495 320.5h1.25M495 322.5h1.25M497 322.5h1.25M503 322.5h1.25M507 320.5h1.25M511 321.5h1.25M515 323.5h1.25M517 322.5h1.25M520 322.5h1.25M523 322.5h1.25M525 323.5h1.25M526 322.5h1.25M527 322.5h1.25M528 322.5h1.25M529 322.5h1.25M529 323.5h1.25M530 322.5h1.25M532 320.5h1.25M533 322.5h1.25M534 322.5h1.25M535 316.5h1.25M536 322.5h1.25M537 322.5h1.25M538 321.5h1.25M541 322.5h1.25M544 321.5h1.25M547 321.5h1.25M551 323.5h1.25M555 322.5h1.25M558 322.5h1.25M559 322.5h1.25M560 322.5h1.25M563 322.5h1.25M567 323.5h1.25M570 322.5h1.25M572 322.5h1.25M573 322.5h1.25M580 320.5h1.25M592 321.5h1.25M592 322.5h1.25M592 323.5h1.25M600 323.5h1.25M602 322.5h1.25M605 321.5h1.25" stroke="#2277ee" opacity="0.9"/>
<path d="M51 428.5h1.25M52 427.5h1.25M52 428.5h1.25M52 429.5h1.25M53 428.5h1.25M53 430.5h1.25M54 427.5h1.25M54 428.5h1.25M54 429.5h1.25M55 430.5h1.25M56 429.5h1.25M57 428.5h1.25M57 429.5h1.25M58 428.5h1.25M58 430.5h1.25M59 427.5h1.25M59 428.5h1.25M59 429.5h1.25M60 420.5h1.25M60 427.5h1.25M60 428.5h1.25M61 427.5h1.25M61 428.5h1.25M61 430.5h1.25M62 427.5h1.25M63 428.5h1.25M63 429.5h1.25M64 428.5h1.25M64 429.5h1.25M65 428.5h1.25M65 429.5h1.25M65 430.5h1.25M66 428.5h1.25M66 429.5h1.25M66 430.5h1.25M67 428.5h1.25M67 429.5h1.25M68 427.5h1.25M68 429.5h1.25M68 430.5h1.25M69 428.5h1.25M69 429.5h1.25M69 430.5h1.25M70 428.5h1.25M70 429.5h1.25M71 429.5h1.25M72 427.5h1.25M72 428.5h1.25M72 429.5h1.25M73 427.5h1.25M73 428.5h1.25M73 429.5h1.25M74 428.5h1.25M74 429.5h1.25M75 426.5h1.25M75 428.5h1.25M75 429.5h1.25M76 427.5h1.25M76 429.5h1.25M77 429.5h1.25M78 426.5h1.25M78 427.5h1.25M78 428.5h1.25M78 430.5h1.25M79 428.5h1.25M80 427.5h1.25M80 428.5h1.25M80 429.5h1.25M81 427.5h1.25M81 428.5h1.25M82 427.5h1.25M82 428.5h1.25M83 428.5h1.25M83 429.5h1.25M84 427.5h1.25M84 428.5h1.25M84 429.5h1.25M85 428.5h1.25M86 427.5h1.25M86 428.5h1.25M86 429.5h1.25M86 430.5h1.25M87 428.5h1.25M87 429.5h1.25M88 427.5h1.25M88 428.5h1.25M88 429.5h1.25M88 431.5h1.25M90 426.5h1.25M90 427.5h1.25M90 429.5h1.25M91 427.5h1.25M91 428.5h1.25M91 429.5h1.25M92 428.5h1.25M93 427.5h1.25M93 428.5h1.25M93 429.5h1.25M94 427.5h1.25M94 429.5h1.25M95 426.5h1.25M95 427.5h1.25M95 429.5h1.25M96 427.5h1.25M97 428.5h1.25M97 429.5h1.25M98 427.5h1.25M98 429.5h1.25M99 427.5h1.25M99 428.5h1.25M99 429.5h1.25M99 430.5h1.25M100 428.5h1.25M100 429.5h1.25M100 430.5h1.25M101 427.5h1.25M101 428.5h1.25M101 429.5h1.25M102 426.5h1.25M102 427.5h1.25M102 428.5h1.25M102 429.5h1.25M103 428.5h1.25M104 428.5h1.25M104 429.5h1.25M105 427.5h1.25M105 428.5h1.25M105 430.5h1.25M106 427.5h1.25M106 428.5h1.25M107 427.5h1.25M107 428.5h1.25M107 430.5h1.25M108 427.5h1.25M108 428.5h1.25M109 427.5h1.25M109 429.5h1.25M110 427.5h1.25M110 428.5h1.25M111 426.5h1.25M111 428.5h1.25M112 427.5h1.25M112 429.5h1.25M112 430.5h1.25M113 426.5h1.25M113 427.5h1.25M113 428.5h1.25M113 429.5h1.25M114 428.5h1.25M114 429.5h1.25M114 430.5h1.25M115 428.5h1.25M115 430.5h1.25M116 428.5h1.25M116 430.5h1.25M117 428.5h1.25M117 429.5h1.25M118 428.5h1.25M119 428.5h1.25M119 429.5h1.25M120 427.5h1.25M120 428.5h1.25M120 430.5h1.25M121 426.5h1.25M121 428.5h1.25M121 429.5h1.25M122 427.5h1.25M122 428.5h1.25M122 429.5h1.25M123 429.5h1.25M123 430.5h1.25M124 428.5h1.25M124 429.5h1.25M124 430.5h1.25M125 427.5h1.25M125 428.5h1.25M126 428.5h1.25M127 427.5h1.25M127 428.5h1.25M127 429.5h1.25M128 428.5h1.25M129 426.5h1.25M129 428.5h1.25M129 429.5h1.25M130 426.5h1.25M130 428.5h1.25M130 429.5h1.25M131 427.5h1.25M131 429.5h1.25M132 428.5h1.25M133 428.5h1.25M133 431.5h1.25M134 428.5h1.25M135 426.5h1.25M135 427.5h1.25M135 429.5h1.25M136 425.5h1.25M136 427.5h1.25M136 428.5h1.25M136 429.5h1.25M137 427.5h1.25M137 428.5h1.25M137 429.5h1.25M137 430.5h1.25M138 428.5h1.25M138 429.5h1.25M139 428.5h1.25M139 429.5h1.25M139 430.5h1.25M140 426.5h1.25M140 428.5h1.25M140 429.5h1.25M141 426.5h1.25M141 429.5h1.25M142 429.5h1.25M143 427.5h1.25M143 428.5h1.25M143 430.5h1.25M144 428.5h1.25M144 429.5h1.25M145 428.5h1.25M146 427.5h1.25M146 428.5h1.25M146 429.5h1.25M147 427.5h1.25M147 428.5h1.25M147 429.5h1.25M148 428.5h1.25M148 429.5h1.25M148 430.5h1.25M149 428.5h1.25M149 429.5h1.25M150 428.5h1.25M151 427.5h1.25M151 428.5h1.25M151 429.5h1.25M152 426.5h1.25M152 428.5h1.25M153 429.5h1.25M154 427.5h1.25M154 428.5h1.25M154 429.5h1.25M154 430.5h1.25M155 427.5h1.25M155 428.5h1.25M155 429.5h1.25M156 427.5h1.25M157 428.5h1.25M158 428.5h1.25M158 430.5h1.25M159 427.5h1.25M159 428.5h1.25M159 429.5h1.25M160 429.5h1.25M163 427.5h1.25M163 428.5h1.25M164 426.5h1.25M164 427.5h1.25M164 428.5h1.25M164 429.5h1.25M164 431.5h1.25M165 427.5h1.25M165 428.5h1.25M165 429.5h1.25M166 427.5h1.25M166 428.5h1.25M166 429.5h1.25M166 430.5h1.25M168 427.5h1.25M168 428.5h1.25M168 429.5h1.25M168 430.5h1.25M169 427.5h1.25M169 428.5h1.25M169 430.5h1.25M170 427.5h1.25M170 428.5h1.25M171 428.5h1.25M172 427.5h1.25M172 428.5h1.25M172 429.5h1.25M173 422.5h1.25M173 427.5h1.25M173 428.5h1.25M173 429.5h1.25M174 429.5h1.25M175 423.5h1.25M175 427.5h1.25M175 428.5h1.25M175 429.5h1.25M176 428.5h1.25M177 426.5h1.25M177 428.5h1.25M178 428.5h1.25M179 421.5h1.25M179 422.5h1.25M179 428.5h1.25M179 429.5h1.25M180 427.5h1.25M180 429.5h1.25M180 430.5h1.25M181 427.5h1.25M181 428.5h1.25M181 429.5h1.25M182 427.5h1.25M182 428.5h1.25M182 429.5h1.25M182 430.5h1.25M183 428.5h1.25M183 429.5h1.25M184 428.5h1.25M185 430.5h1.25M186 428.5h1.25M186 429.5h1.25M187 427.5h1.25M187 428.5h1.25M187 429.5h1.25M188 427.5h1.25M188 428.5h1.25M189 427.5h1.25M189 428.5h1.25M189 429.5h1.25M189 430.5h1.25M190 428.5h1.25M190 429.5h1.25M191 429.5h1.25M192 427.5h1.25M192 428.5h1.25M192 429.5h1.25M193 422.5h1.25M193 427.5h1.25M193 428.5h1.25M193 430.5h1.25M193 431.5h1.25M194 427.5h1.25M194 428.5h1.25M195 428.5h1.25M195 429.5h1.25M196 427.5h1.25M196 429.5h1.25M196 430.5h1.25M197 428.5h1.25M197 429.5h1.25M199 429.5h1.25M200 426.5h1.25M200 428.5h1.25M200 429.5h1.25M200 430.5h1.25M201 428.5h1.25M201 429.5h1.25M202 428.5h1.25M202 429.5h1.25M203 427.5h1.25M203 428.5h1.25M203 429.5h1.25M204 427.5h1.25M204 428.5h1.25M204 429.5h1.25M204 430.5h1.25M205 427.5h1.25M205 429.5h1.25M206 428.5h1.25M207 420.5h1.25M207 425.5h1.25M207 427.5h1.25M207 428.5h1.25M207 429.5h1.25M207 430.5h1.25M208 428.5h1.25M208 429.5h1.25M209 427.5h1.25M209 428.5h1.25M209 429.5h1.25M210 427.5h1.25M210 428.5h1.25M210 429.5h1.25M211 429.5h1.25M212 421.5h1.25M212 428.5h1.25M212 429.5h1.25M212 430.5h1.25M213 428.5h1.25M213 429.5h1.25M213 430.5h1.25M214 428.5h1.25M215 428.5h1.25M216 427.5h1.25M216 428.5h1.25M216 429.5h1.25M217 427.5h1.25M217 428.5h1.25M217 429.5h1.25M218 427.5h1.25M218 428.5h1.25M218 430.5h1.25M219 427.5h1.25M219 428.5h1.25M219 429.5h1.25M220 428.5h1.25M220 429.5h1.25M220 430.5h1.25M221 426.5h1.25M221 428.5h1.25M221 430.5h1.25M222 427.5h1.25M222 428.5h1.25M222 430.5h1.25M223 427.5h1.25M223 428.5h1.25M224 427.5h1.25M224 429.5h1.25M225 428.5h1.25M226 427.5h1.25M226 430.5h1.25M227 427.5h1.25M227 428.5h1.25M227 429.5h1.25M228 428.5h1.25M228 429.5h1.25M229 427.5h1.25M229 429.5h1.25M230 428.5h1.25M230 430.5h1.25M231 426.5h1.25M231 428.5h1.25M231 429.5h1.25M232 427.5h1.25M232 428.5h1.25M233 428.5h1.25M233 429.5h1.25M234 429.5h1.25M234 430.5h1.25M235 427.5h1.25M235 429.5h1.25M236 428.5h1.25M237 428.5h1.25M238 426.5h1.25M238 427.5h1.25M238 428.5h1.25M239 427.5h1.25M239 428.5h1.25M239 430.5h1.25M240 427.5h1.25M240 428.5h1.25M241 427.5h1.25M241 428.5h1.25M241 429.5h1.25M242 427.5h1.25M242 428.5h1.25M242 429.5h1.25M243 429.5h1.25M244 428.5h1.25M244 429.5h1.25M245 427.5h1.25M245 428.5h1.25M245 429.5h1.25M246 427.5h1.25M246 428.5h1.25M246 429.5h1.25M247 428.5h1.25M247 429.5h1.25M248 426.5h1.25M248 427.5h1.25M248 428.5h1.25M248 429.5h1.25M249 428.5h1.25M249 429.5h1.25M250 427.5h1.25M250 428.5h1.25M250 429.5h1.25M251 428.5h1.25M251 429.5h1.25M252 428.5h1.25M252 429.5h1.25M253 429.5h1.25M254 427.5h1.25M254 429.5h1.25M255 427.5h1.25M255 428.5h1.25M255 430.5h1.25M256 428.5h1.25M256 429.5h1.25M257 427.5h1.25M257 428.5h1.25M257 429.5h1.25M257 430.5h1.25M258 427.5h1.25M258 429.5h1.25M258 430.5h1.25M259 427.5h1.25M259 428.5h1.25M260 427.5h1.25M260 429.5h1.25M261 424.5h1.25M261 427.5h1.25M261 428.5h1.25M262 427.5h1.25M262 428.5h1.25M262 429.5h1.25M263 427.5h1.25M263 428.5h1.25M263 429.5h1.25M263 430.5h1.25M264 429.5h1.25M264 430.5h1.25M265 428.5h1.25M265 429.5h1.25M265 430.5h1.25M266 430.5h1.25M267 427.5h1.25M267 428.5h1.25M267 429.5h1.25M267 430.5h1.25M268 427.5h1.25M268 428.5h1.25M269 427.5h1.25M269 429.5h1.25M270 427.5h1.25M270 428.5h1.25M270 430.5h1.25M271 425.5h1.25M271 426.5h1.25M271 428.5h1.25M271 430.5h1.25M273 427.5h1.25M273 428.5h1.25M273 429.5h1.25M273 430.5h1.25M274 428.5h1.25M274 429.5h1.25M275 427.5h1.25M275 428.5h1.25M275 429.5h1.25M275 430.5h1.25M276 425.5h1.25M277 427.5h1.25M277 428.5h1.25M278 427.5h1.25M278 428.5h1.25M278 429.5h1.25M279 420.5h1.25M279 427.5h1.25M279 428.5h1.25M280 426.5h1.25M280 428.5h1.25M281 428.5h1.25M281 429.5h1.25M282 427.5h1.25M282 428.5h1.25M282 430.5h1.25M283 427.5h1.25M283 428.5h1.25M283 429.5h1.25M283 430.5h1.25M284 428.5h1.25M284 429.5h1.25M284 431.5h1.25M285 427.5h1.25M285 428.5h1.25M285 429.5h1.25M286 427.5h1.25M286 428.5h1.25M287 427.5h1.25M288 428.5h1.25M288 429.5h1.25M288 430.5h1.25M289 428.5h1.25M289 429.5h1.25M290 428.5h1.25M291 428.5h1.25M291 429.5h1.25M292 427.5h1.25M292 428.5h1.25M292 429.5h1.25M293 428.5h1.25M293 430.5h1.25M295 427.5h1.25M296 429.5h1.25M297 429.5h1.25M298 427.5h1.25M298 428.5h1.25M299 428.5h1.25M299 429.5h1.25M300 430.5h1.25M301 428.5h1.25M301 429.5h1.25M302 427.5h1.25M302 428.5h1.25M302 429.5h1.25M303 428.5h1.25M303 429.5h1.25M304 428.5h1.25M304 429.5h1.25M305 427.5h1.25M305 428.5h1.25M305 429.5h1.25M306 427.5h1.25M306 428.5h1.25M306 429.5h1.25M307 427.5h1.25M307 428.5h1.25M307 429.5h1.25M308 420.5h1.25M308 427.5h1.25M308 428.5h1.25M308 429.5h1.25M308 430.5h1.25M309 427.5h1.25M309 429.5h1.25M310 428.5h1.25M311 428.5h1.25M312 428.5h1.25M312 429.5h1.25M313 427.5h1.25M313 428.5h1.25M313 429.5h1.25M313 430.5h1.25M314 427.5h1.25M314 428.5h1.25M315 429.5h1.25M316 426.5h1.25M316 428.5h1.25M317 427.5h1.25M317 428.5h1.25M317 430.5h1.25M318 427.5h1.25M318 428.5h1.25M318 429.5h1.25M318 430.5h1.25M319 427.5h1.25M319 428.5h1.25M319 429.5h1.25M320 426.5h1.25M320 428.5h1.25M320 429.5h1.25M321 428.5h1.25M321 429.5h1.25M322 428.5h1.25M322 429.5h1.25M323 427.5h1.25M324 427.5h1.25M324 428.5h1.25M324 429.5h1.25M325 427.5h1.25M325 428.5h1.25M325 429.5h1.25M326 428.5h1.25M326 429.5h1.25M327 428.5h1.25M327 429.5h1.25M328 427.5h1.25M328 428.5h1.25M328 429.5h1.25M329 428.5h1.25M329 429.5h1.25M330 427.5h1.25M330 428.5h1.25M331 427.5h1.25M331 428.5h1.25M331 430.5h1.25M332 427.5h1.25M332 428.5h1.25M332 430.5h1.25M333 427.5h1.25M333 428.5h1.25M333 429.5h1.25M334 428.5h1.25M334 429.5h1.25M335 428.5h1.25M336 426.5h1.25M337 421.5h1.25M337 428.5h1.25M337 429.5h1.25M338 427.5h1.25M338 429.5h1.25M339 427.5h1.25M339 429.5h1.25M340 428.5h1.25M340 429.5h1.25M341 427.5h1.25M341 428.5h1.25M341 429.5h1.25M342 426.5h1.25M342 427.5h1.25M342 429.5h1.25M343 427.5h1.25M343 428.5h1.25M343 430.5h1.25M344 427.5h1.25M344 428.5h1.25M344 429.5h1.25M345 427.5h1.25M345 428.5h1.25M345 429.5h1.25M346 427.5h1.25M346 428.5h1.25M346 429.5h1.25M346 430.5h1.25M347 427.5h1.25M347 428.5h1.25M348 427.5h1.25M348 428.5h1.25M348 429.5h1.25M349 426.5h1.25M349 428.5h1.25M349 429.5h1.25M349 430.5h1.25M350 422.5h1.25M351 428.5h1.25M353 429.5h1.25M353 430.5h1.25M354 428.5h1.25M354 430.5h1.25M355 423.5h1.25M355 428.5h1.25M355 430.5h1.25M356 428.5h1.25M356 429.5h1.25M357 428.5h1.25M357 430.5h1.25M358 428.5h1.25M358 429.5h1.25M359 426.5h1.25M359 429.5h1.25M360 428.5h1.25M361 429.5h1.25M362 428.5h1.25M362 429.5h1.25M363 429.5h1.25M364 426.5h1.25M364 427.5h1.25M364 428.5h1.25M365 426.5h1.25M365 428.5h1.25M365 429.5h1.25M366 428.5h1.25M366 429.5h1.25M367 428.5h1.25M367 429.5h1.25M368 429.5h1.25M369 427.5h1.25M369 428.5h1.25M370 427.5h1.25M370 429.5h1.25M371 427.5h1.25M371 428.5h1.25M372 426.5h1.25M372 427.5h1.25M373 428.5h1.25M373 430.5h1.25M374 428.5h1.25M374 429.5h1.25M375 427.5h1.25M376 427.5h1.25M376 428.5h1.25M377 427.5h1.25M377 428.5h1.25M377 429.5h1.25M378 428.5h1.25M378 429.5h1.25M379 428.5h1.25M380 427.5h1.25M380 428.5h1.25M380 431.5h1.25M381 427.5h1.25M381 428.5h1.25M382 428.5h1.25M383 427.5h1.25M383 428.5h1.25M384 427.5h1.25M385 427.5h1.25M385 429.5h1.25M385 430.5h1.25M386 428.5h1.25M386 429.5h1.25M387 424.5h1.25M387 427.5h1.25M387 428.5h1.25M387 429.5h1.25M388 427.5h1.25M388 429.5h1.25M389 428.5h1.25M389 429.5h1.25M390 431.5h1.25M391 427.5h1.25M391 429.5h1.25M392 427.5h1.25M392 429.5h1.25M392 430.5h1.25M393 427.5h1.25M393 428.5h1.25M395 428.5h1.25M395 429.5h1.25M395 430.5h1.25M396 428.5h1.25M396 429.5h1.25M396 430.5h1.25M397 427.5h1.25M397 428.5h1.25M397 431.5h1.25M398 428.5h1.25M398 429.5h1.25M399 427.5h1.25M399 429.5h1.25M401 428.5h1.25M403 427.5h1.25M403 429.5h1.25M404 427.5h1.25M404 428.5h1.25M405 428.5h1.25M405 429.5h1.25M406 428.5h1.25M406 429.5h1.25M407 427.5h1.25M407 428.5h1.25M407 429.5h1.25M408 427.5h1.25M408 428.5h1.25M408 429.5h1.25M408 430.5h1.25M409 428.5h1.25M409 429.5h1.25M410 427.5h1.25M411 427.5h1.25M411 428.5h1.25M411 430.5h1.25M412 425.5h1.25M412 428.5h1.25M413 429.5h1.25M414 427.5h1.25M414 428.5h1.25M414 429.5h1.25M415 427.5h1.25M415 428.5h1.25M415 429.5h1.25M415 430.5h1.25M416 427.5h1.25M416 428.5h1.25M416 429.5h1.25M417 425.5h1.25M417 427.5h1.25M417 429.5h1.25M418 428.5h1.25M419 429.5h1.25M420 428.5h1.25M420 429.5h1.25M421 429.5h1.25M422 427.5h1.25M422 428.5h1.25M422 429.5h1.25M424 427.5h1.25M424 428.5h1.25M424 430.5h1.25M425 429.5h1.25M426 427.5h1.25M426 428.5h1.25M426 429.5h1.25M427 427.5h1.25M427 428.5h1.25M428 426.5h1.25M428 427.5h1.25M429 427.5h1.25M430 427.5h1.25M430 429.5h1.25M431 427.5h1.25M431 429.5h1.25M431 430.5h1.25M432 427.5h1.25M432 428.5h1.25M432 429.5h1.25M434 429.5h1.25M435 422.5h1.25M435 427.5h1.25M435 428.5h1.25M435 429.5h1.25M436 426.5h1.25M436 427.5h1.25M436 428.5h1.25M437 427.5h1.25M437 429.5h1.25M437 430.5h1.25M439 427.5h1.25M439 428.5h1.25M439 429.5h1.25M440 427.5h1.25M440 428.5h1.25M440 429.5h1.25M441 427.5h1.25M441 428.5h1.25M442 427.5h1.25M442 428.5h1.25M443 428.5h1.25M443 429.5h1.25M444 429.5h1.25M444 430.5h1.25M445 429.5h1.25M446 429.5h1.25M447 427.5h1.25M447 429.5h1.25M447 430.5h1.25M448 428.5h1.25M449 427.5h1.25M449 428.5h1.25M449 429.5h1.25M451 428.5h1.25M451 429.5h1.25M451 430.5h1.25M452 428.5h1.25M453 428.5h1.25M453 429.5h1.25M454 429.5h1.25M455 427.5h1.25M455 428.5h1.25M455 429.5h1.25M456 428.5h1.25M456 429.5h1.25M456 430.5h1.25M457 428.5h1.25M458 427.5h1.25M458 428.5h1.25M458 429.5h1.25M460 427.5h1.25M460 428.5h1.25M460 429.5h1.25M461 429.5h1.25M462 428.5h1.25M462 429.5h1.25M463 429.5h1.25M464 428.5h1.25M465 426.5h1.25M469 426.5h1.25M471 427.5h1.25M476 428.5h1.25M477 429.5h1.25M478 427.5h1.25M478 428.5h1.25M478 429.5h1.25M480 428.5h1.25M482 429.5h1.25M483 427.5h1.25M487 428.5h1.25M488 427.5h1.25M490 427.5h1.25M490 428.5h1.25M495 427.5h1.25M495 429.5h1.25M495 430.5h1.25M496 428.5h1.25M501 427.5h1.25M506 430.5h1.25M507 428.5h1.25M508 427.5h1.25M510 429.5h1.25M511 427.5h1.25M513 426.5h1.25M514 430.5h1.25M528 427.5h1.25M529 430.5h1.25M531 428.5h1.25M533 428.5h1.25M538 429.5h1.25M541 426.5h1.25M541 427.5h1.25M541 428.5h1.25M543 428.5h1.25M550 426.5h1.25M554 428.5h1.25M556 429.5h1.25M560 428.5h1.25M562 428.5h1.25M566 428.5h1.25M568 429.5h1.25M579 429.5h1.25M584 429.5h1.25M595 426.5h1.25M595 427.5h1.25M596 427.5h1.25M597 428.5h1.25M602 427.5h1.25M604 427.5h1.25M604 431.5h1.25M606 428.5h1.25" stroke="#20d420" opacity="0.9"/>
<path d="M51 436.5h1.25M51 437.5h1.25M52 435.5h1.25M52 436.5h1.25M52 437.5h1.25M53 435.5h1.25M53 436.5h1.25M53 437.5h1.25M53 438.5h1.25M54 435.5h1.25M54 436.5h1.25M54 437.5h1.25M54 438.5h1.25M55 435.5h1.25M55 437.5h1.25M56 436.5h1.25M57 433.5h1.25M57 435.5h1.25M57 437.5h1.25M58 433.5h1.25M58 434.5h1.25M58 435.5h1.25M58 436.5h1.25M58 437.5h1.25M59 434.5h1.25M59 436.5h1.25M60 434.5h1.25M60 435.5h1.25M61 434.5h1.25M61 435.5h1.25M61 436.5h1.25M61 437.5h1.25M62 435.5h1.25M62 436.5h1.25M63 435.5h1.25M63 436.5h1.25M63 438.5h1.25M64 434.5h1.25M64 436.5h1.25M64 438.5h1.25M65 433.5h1.25M65 435.5h1.25M65 436.5h1.25M65 437.5h1.25M66 433.5h1.25M66 436.5h1.25M66 437.5h1.25M67 434.5h1.25M67 435.5h1.25M67 436.5h1.25M67 437.5h1.25M68 435.5h1.25M68 436.5h1.25M68 437.5h1.25M68 438.5h1.25M69 434.5h1.25M69 435.5h1.25M69 436.5h1.25M70 434.5h1.25M70 435.5h1.25M70 436.5h1.25M70 437.5h1.25M71 434.5h1.25M71 435.5h1.25M71 436.5h1.25M71 437.5h1.25M72 435.5h1.25M72 436.5h1.25M72 437.5h1.25M73 434.5h1.25M73 435.5h1.25M73 436.5h1.25M73 437.5h1.25M74 435.5h1.25M74 436.5h1.25M74 437.5h1.25M75 434.5h1.25M75 435.5h1.25M75 437.5h1.25M75 438.5h1.25M76 434.5h1.25M76 436.5h1.25M77 435.5h1.25M77 436.5h1.25M77 437.5h1.25M78 436.5h1.25M79 432.5h1.25M79 434.5h1.25M79 435.5h1.25M79 436.5h1.25M80 434.5h1.25M80 435.5h1.25M80 436.5h1.25M80 437.5h1.25M81 436.5h1.25M81 438.5h1.25M82 433.5h1.25M82 435.5h1.25M82 436.5h1.25M82 437.5h1.25M83 435.5h1.25M83 436.5h1.25M83 437.5h1.25M84 435.5h1.25M84 436.5h1.25M84 437.5h1.25M84 438.5h1.25M85 434.5h1.25M85 435.5h1.25M85 436.5h1.25M85 437.5h1.25M86 436.5h1.25M86 437.5h1.25M86 438.5h1.25M87 434.5h1.25M87 436.5h1.25M87 437.5h1.25M88 434.5h1.25M88 435.5h1.25M88 436.5h1.25M88 437.5h1.25M88 438.5h1.25M89 434.5h1.25M89 435.5h1.25M89 436.5h1.25M89 437.5h1.25M89 438.5h1.25M90 435.5h1.25M90 436.5h1.25M90 437.5h1.25M91 433.5h1.25M91 434.5h1.25M91 435.5h1.25M91 436.5h1.25M92 432.5h1.25M92 433.5h1.25M92 436.5h1.25M92 437.5h1.25M92 438.5h1.25M93 434.5h1.25M93 435.5h1.25M93 436.5h1.25M94 433.5h1.25M94 434.5h1.25M94 435.5h1.25M94 436.5h1.25M94 437.5h1.25M94 438.5h1.25M95 434.5h1.25M95 435.5h1.25M95 436.5h1.25M95 437.5h1.25M96 433.5h1.25M96 435.5h1.25M96 438.5h1.25M97 433.5h1.25M97 434.5h1.25M97 435.5h1.25M97 436.5h1.25M98 433.5h1.25M98 435.5h1.25M98 436.5h1.25M98 437.5h1.25M98 438.5h1.25M99 432.5h1.25M99 434.5h1.25M99 435.5h1.25M99 436.5h1.25M100 435.5h1.25M100 436.5h1.25M100 437.5h1.25M101 435.5h1.25M101 436.5h1.25M102 434.5h1.25M102 435.5h1.25M102 436.5h1.25M102 438.5h1.25M103 432.5h1.25M103 435.5h1.25M103 437.5h1.25M103 438.5h1.25M104 433.5h1.25M104 434.5h1.25M104 435.5h1.25M104 436.5h1.25M104 438.5h1.25M105 435.5h1.25M105 436.5h1.25M105 437.5h1.25M105 438.5h1.25M106 435.5h1.25M106 436.5h1.25M106 437.5h1.25M107 434.5h1.25M107 435.5h1.25M107 436.5h1.25M108 434.5h1.25M108 436.5h1.25M108 439.5h1.25M109 434.5h1.25M109 435.5h1.25M109 436.5h1.25M109 437.5h1.25M110 436.5h1.25M110 437.5h1.25M111 435.5h1.25M111 436.5h1.25M111 437.5h1.25M112 436.5h1.25M112 437.5h1.25M113 433.5h1.25M113 434.5h1.25M113 436.5h1.25M113 437.5h1.25M113 438.5h1.25M114 432.5h1.25M114 435.5h1.25M114 436.5h1.25M114 437.5h1.25M115 433.5h1.25M115 434.5h1.25M115 435.5h1.25M115 436.5h1.25M115 437.5h1.25M116 435.5h1.25M116 436.5h1.25M116 437.5h1.25M116 438.5h1.25M117 435.5h1.25M117 436.5h1.25M118 435.5h1.25M118 437.5h1.25M118 438.5h1.25M119 435.5h1.25M119 436.5h1.25M119 438.5h1.25M120 433.5h1.25M120 434.5h1.25M120 435.5h1.25M120 436.5h1.25M120 437.5h1.25M121 435.5h1.25M121 436.5h1.25M121 437.5h1.25M122 434.5h1.25M122 435.5h1.25M122 437.5h1.25M123 433.5h1.25M123 434.5h1.25M123 435.5h1.25M123 436.5h1.25M123 437.5h1.25M124 437.5h1.25M125 434.5h1.25M125 435.5h1.25M125 436.5h1.25M126 434.5h1.25M126 435.5h1.25M126 436.5h1.25M126 437.5h1.25M127 435.5h1.25M127 436.5h1.25M128 433.5h1.25M128 434.5h1.25M128 435.5h1.25M128 436.5h1.25M128 437.5h1.25M128 438.5h1.25M129 435.5h1.25M129 436.5h1.25M129 437.5h1.25M129 438.5h1.25M130 434.5h1.25M130 435.5h1.25M130 436.5h1.25M131 433.5h1.25M131 435.5h1.25M131 436.5h1.25M131 437.5h1.25M132 433.5h1.25M132 434.5h1.25M132 435.5h1.25M132 436.5h1.25M133 433.5h1.25M133 435.5h1.25M133 436.5h1.25M134 435.5h1.25M135 435.5h1.25M135 436.5h1.25M135 437.5h1.25M135 438.5h1.25M136 433.5h1.25M136 434.5h1.25M136 436.5h1.25M137 431.5h1.25M137 432.5h1.25M137 433.5h1.25M137 435.5h1.25M137 436.5h1.25M137 437.5h1.25M137 438.5h1.25M138 435.5h1.25M138 436.5h1.25M138 437.5h1.25M139 434.5h1.25M139 435.5h1.25M139 436.5h1.25M139 438.5h1.25M140 434.5h1.25M140 435.5h1.25M141 434.5h1.25M141 435.5h1.25M141 436.5h1.25M141 437.5h1.25M142 433.5h1.25M142 435.5h1.25M143 435.5h1.25M143 437.5h1.25M143 438.5h1.25M144 434.5h1.25M144 436.5h1.25M144 437.5h1.25M145 433.5h1.25M145 436.5h1.25M145 438.5h1.25M146 432.5h1.25M146 434.5h1.25M146 435.5h1.25M146 436.5h1.25M146 437.5h1.25M146 438.5h1.25M147 435.5h1.25M147 436.5h1.25M147 437.5h1.25M147 438.5h1.25M148 434.5h1.25M148 435.5h1.25M148 436.5h1.25M148 437.5h1.25M148 439.5h1.25M149 434.5h1.25M149 435.5h1.25M149 436.5h1.25M149 437.5h1.25M150 434.5h1.25M150 435.5h1.25M150 436.5h1.25M150 437.5h1.25M151 432.5h1.25M151 435.5h1.25M151 438.5h1.25M152 434.5h1.25M152 435.5h1.25M152 436.5h1.25M152 437.5h1.25M153 434.5h1.25M153 435.5h1.25M153 436.5h1.25M153 437.5h1.25M154 435.5h1.25M154 436.5h1.25M155 434.5h1.25M155 435.5h1.25M155 436.5h1.25M155 437.5h1.25M156 434.5h1.25M156 436.5h1.25M156 437.5h1.25M156 438.5h1.25M157 435.5h1.25M157 436.5h1.25M157 437.5h1.25M158 433.5h1.25M158 436.5h1.25M159 434.5h1.25M159 435.5h1.25M159 436.5h1.25M159 438.5h1.25M159 439.5h1.25M160 434.5h1.25M160 435.5h1.25M160 436.5h1.25M160 437.5h1.25M160 438.5h1.25M161 433.5h1.25M161 435.5h1.25M161 437.5h1.25M162 434.5h1.25M162 435.5h1.25M162 436.5h1.25M162 438.5h1.25M163 435.5h1.25M163 436.5h1.25M163 437.5h1.25M163 438.5h1.25M164 434.5h1.25M164 435.5h1.25M164 436.5h1.25M164 437.5h1.25M165 435.5h1.25M165 436.5h1.25M165 437.5h1.25M166 436.5h1.25M167 433.5h1.25M167 434.5h1.25M167 435.5h1.25M167 437.5h1.25M168 434.5h1.25M168 435.5h1.25M168 436.5h1.25M168 437.5h1.25M168 438.5h1.25M169 434.5h1.25M169 435.5h1.25M169 436.5h1.25M169 437.5h1.25M169 438.5h1.25M170 437.5h1.25M170 438.5h1.25M171 435.5h1.25M171 436.5h1.25M172 435.5h1.25M172 436.5h1.25M173 434.5h1.25M173 435.5h1.25M173 436.5h1.25M173 437.5h1.25M174 434.5h1.25M174 435.5h1.25M174 436.5h1.25M174 437.5h1.25M175 433.5h1.25M175 435.5h1.25M175 437.5h1.25M176 435.5h1.25M176 436.5h1.25M176 437.5h1.25M177 435.5h1.25M177 436.5h1.25M177 437.5h1.25M177 438.5h1.25M178 435.5h1.25M178 436.5h1.25M178 437.5h1.25M179 434.5h1.25M179 435.5h1.25M179 436.5h1.25M179 438.5h1.25M180 434.5h1.25M180 435.5h1.25M180 437.5h1.25M181 435.5h1.25M181 436.5h1.25M181 437.5h1.25M182 434.5h1.25M182 435.5h1.25M182 436.5h1.25M183 434.5h1.25M183 435.5h1.25M183 436.5h1.25M183 437.5h1.25M183 439.5h1.25M184 433.5h1.25M184 435.5h1.25M184 436.5h1.25M184 437.5h1.25M184 438.5h1.25M185 435.5h1.25M185 436.5h1.25M185 437.5h1.25M186 436.5h1.25M186 437.5h1.25M187 436.5h1.25M187 437.5h1.25M188 435.5h1.25M189 434.5h1.25M189 435.5h1.25M189 436.5h1.25M189 437.5h1.25M190 434.5h1.25M190 435.5h1.25M190 436.5h1.25M191 434.5h1.25M191 435.5h1.25M191 436.5h1.25M192 434.5h1.25M192 435.5h1.25M192 436.5h1.25M192 437.5h1.25M193 434.5h1.25M193 435.5h1.25M193 437.5h1.25M194 433.5h1.25M194 434.5h1.25M194 435.5h1.25M194 436.5h1.25M194 437.5h1.25M194 438.5h1.25M195 434.5h1.25M195 435.5h1.25M195 436.5h1.25M195 437.5h1.25M195 438.5h1.25M196 436.5h1.25M196 437.5h1.25M197 434.5h1.25M197 435.5h1.25M197 436.5h1.25M198 435.5h1.25M198 436.5h1.25M199 434.5h1.25M199 436.5h1.25M199 437.5h1.25M200 431.5h1.25M200 434.5h1.25M200 436.5h1.25M201 435.5h1.25M201 436.5h1.25M201 438.5h1.25M201 439.5h1.25M202 433.5h1.25M202 434.5h1.25M202 435.5h1.25M202 436.5h1.25M203 434.5h1.25M203 436.5h1.25M203 437.5h1.25M203 438.5h1.25M204 434.5h1.25M204 435.5h1.25M204 436.5h1.25M204 438.5h1.25M205 435.5h1.25M205 436.5h1.25M206 436.5h1.25M206 437.5h1.25M207 434.5h1.25M207 435.5h1.25M207 436.5h1.25M207 437.5h1.25M208 435.5h1.25M208 436.5h1.25M208 437.5h1.25M208 438.5h1.25M208 439.5h1.25M209 434.5h1.25M209 435.5h1.25M209 436.5h1.25M209 437.5h1.25M210 436.5h1.25M210 437.5h1.25M211 436.5h1.25M211 437.5h1.25M212 435.5h1.25M212 436.5h1.25M212 437.5h1.25M213 434.5h1.25M213 435.5h1.25M213 436.5h1.25M213 437.5h1.25M214 435.5h1.25M214 436.5h1.25M214 437.5h1.25M214 438.5h1.25M215 433.5h1.25M215 434.5h1.25M215 435.5h1.25M215 436.5h1.25M215 437.5h1.25M216 434.5h1.25M216 435.5h1.25M216 436.5h1.25M216 437.5h1.25M217 435.5h1.25M217 437.5h1.25M218 436.5h1.25M218 438.5h1.25M219 434.5h1.25M219 435.5h1.25M219 436.5h1.25M220 434.5h1.25M220 435.5h1.25M220 436.5h1.25M220 437.5h1.25M221 435.5h1.25M221 436.5h1.25M221 437.5h1.25M222 434.5h1.25M222 435.5h1.25M222 436.5h1.25M222 437.5h1.25M223 434.5h1.25M223 435.5h1.25M223 436.5h1.25M223 437.5h1.25M223 438.5h1.25M224 438.5h1.25M225 435.5h1.25M226 435.5h1.25M226 437.5h1.25M226 438.5h1.25M227 434.5h1.25M227 435.5h1.25M227 437.5h1.25M228 433.5h1.25M228 435.5h1.25M228 436.5h1.25M228 437.5h1.25M229 432.5h1.25M229 434.5h1.25M229 435.5h1.25M229 436.5h1.25M229 437.5h1.25M229 438.5h1.25M230 434.5h1.25M230 435.5h1.25M230 436.5h1.25M231 434.5h1.25M231 436.5h1.25M231 438.5h1.25M231 439.5h1.25M232 435.5h1.25M232 436.5h1.25M232 437.5h1.25M233 433.5h1.25M233 435.5h1.25M233 436.5h1.25M234 434.5h1.25M234 435.5h1.25M234 436.5h1.25M234 437.5h1.25M235 433.5h1.25M235 435.5h1.25M235 436.5h1.25M235 437.5h1.25M235 439.5h1.25M236 434.5h1.25M236 435.5h1.25M236 436.5h1.25M236 437.5h1.25M237 434.5h1.25M237 435.5h1.25M237 436.5h1.25M238 434.5h1.25M238 435.5h1.25M238 436.5h1.25M238 437.5h1.25M239 434.5h1.25M239 435.5h1.25M239 436.5h1.25M239 438.5h1.25M240 434.5h1.25M240 435.5h1.25M240 436.5h1.25M240 437.5h1.25M241 435.5h1.25M241 436.5h1.25M242 434.5h1.25M242 435.5h1.25M242 436.5h1.25M242 437.5h1.25M243 433.5h1.25M243 436.5h1.25M243 437.5h1.25M244 436.5h1.25M244 437.5h1.25M245 434.5h1.25M245 435.5h1.25M245 436.5h1.25M245 438.5h1.25M246 435.5h1.25M246 436.5h1.25M246 437.5h1.25M247 434.5h1.25M247 436.5h1.25M248 436.5h1.25M248 437.5h1.25M249 434.5h1.25M249 435.5h1.25M249 436.5h1.25M250 434.5h1.25M250 435.5h1.25M250 436.5h1.25M250 437.5h1.25M251 433.5h1.25M251 434.5h1.25M251 435.5h1.25M251 436.5h1.25M251 437.5h1.25M252 432.5h1.25M252 436.5h1.25M252 437.5h1.25M253 435.5h1.25M253 436.5h1.25M253 437.5h1.25M254 435.5h1.25M255 434.5h1.25M255 435.5h1.25M255 436.5h1.25M255 437.5h1.25M255 438.5h1.25M256 434.5h1.25M256 435.5h1.25M256 436.5h1.25M256 438.5h1.25M257 434.5h1.25M257 435.5h1.25M257 436.5h1.25M257 437.5h1.25M258 433.5h1.25M258 434.5h1.25M258 435.5h1.25M258 436.5h1.25M258 437.5h1.25M259 434.5h1.25M259 435.5h1.25M259 436.5h1.25M260 433.5h1.25M260 434.5h1.25M260 435.5h1.25M260 437.5h1.25M260 438.5h1.25M261 434.5h1.25M261 435.5h1.25M261 437.5h1.25M262 434.5h1.25M262 435.5h1.25M262 436.5h1.25M262 437.5h1.25M263 433.5h1.25M263 437.5h1.25M264 435.5h1.25M265 433.5h1.25M265 434.5h1.25M265 436.5h1.25M265 437.5h1.25M266 435.5h1.25M266 436.5h1.25M266 438.5h1.25M267 435.5h1.25M267 436.5h1.25M267 438.5h1.25M268 433.5h1.25M268 435.5h1.25M268 436.5h1.25M268 437.5h1.25M269 435.5h1.25M269 436.5h1.25M269 437.5h1.25M270 434.5h1.25M270 435.5h1.25M270 436.5h1.25M271 434.5h1.25M271 435.5h1.25M271 436.5h1.25M271 437.5h1.25M272 433.5h1.25M272 434.5h1.25M272 436.5h1.25M272 437.5h1.25M272 438.5h1.25M273 433.5h1.25M273 435.5h1.25M273 436.5h1.25M273 437.5h1.25M274 435.5h1.25M274 436.5h1.25M275 433.5h1.25M275 436.5h1.25M275 437.5h1.25M276 433.5h1.25M276 434.5h1.25M276 435.5h1.25M276 436.5h1.25M276 437.5h1.25M276 438.5h1.25M277 434.5h1.25M277 435.5h1.25M277 437.5h1.25M277 438.5h1.25M278 433.5h1.25M278 435.5h1.25M278 436.5h1.25M278 437.5h1.25M278 439.5h1.25M279 434.5h1.25M279 435.5h1.25M279 436.5h1.25M279 438.5h1.25M280 434.5h1.25M280 435.5h1.25M280 436.5h1.25M280 437.5h1.25M280 438.5h1.25M281 432.5h1.25M281 434.5h1.25M281 435.5h1.25M281 436.5h1.25M281 437.5h1.25M282 433.5h1.25M282 434.5h1.25M282 435.5h1.25M282 436.5h1.25M282 437.5h1.25M282 438.5h1.25M283 435.5h1.25M283 437.5h1.25M284 434.5h1.25M284 436.5h1.25M284 437.5h1.25M285 435.5h1.25M285 436.5h1.25M285 437.5h1.25M285 438.5h1.25M286 431.5h1.25M286 434.5h1.25M286 436.5h1.25M286 437.5h1.25M287 435.5h1.25M287 436.5h1.25M288 435.5h1.25M288 437.5h1.25M289 435.5h1.25M289 436.5h1.25M289 437.5h1.25M290 434.5h1.25M290 435.5h1.25M290 436.5h1.25M291 435.5h1.25M291 436.5h1.25M291 437.5h1.25M292 434.5h1.25M292 435.5h1.25M292 436.5h1.25M293 434.5h1.25M293 435.5h1.25M293 436.5h1.25M294 433.5h1.25M294 437.5h1.25M295 435.5h1.25M295 436.5h1.25M296 435.5h1.25M296 436.5h1.25M296 440.5h1.25M297 433.5h1.25M297 434.5h1.25M297 435.5h1.25M297 437.5h1.25M297 438.5h1.25M298 434.5h1.25M298 436.5h1.25M298 437.5h1.25M299 433.5h1.25M299 434.5h1.25M299 435.5h1.25M299 436.5h1.25M299 437.5h1.25M300 435.5h1.25M300 437.5h1.25M301 434.5h1.25M301 435.5h1.25M301 436.5h1.25M301 437.5h1.25M301 438.5h1.25M302 437.5h1.25M302 438.5h1.25M302 439.5h1.25M303 434.5h1.25M303 435.5h1.25M303 436.5h1.25M304 434.5h1.25M304 436.5h1.25M304 437.5h1.25M304 439.5h1.25M305 433.5h1.25M305 434.5h1.25M305 436.5h1.25M305 437.5h1.25M305 438.5h1.25M306 433.5h1.25M306 436.5h1.25M306 437.5h1.25M306 439.5h1.25M307 435.5h1.25M307 436.5h1.25M308 434.5h1.25M308 435.5h1.25M308 436.5h1.25M309 434.5h1.25M309 435.5h1.25M309 436.5h1.25M309 437.5h1.25M310 433.5h1.25M310 434.5h1.25M310 435.5h1.25M310 437.5h1.25M311 432.5h1.25M311 436.5h1.25M312 435.5h1.25M312 436.5h1.25M312 437.5h1.25M313 433.5h1.25M313 435.5h1.25M313 436.5h1.25M313 437.5h1.25M314 435.5h1.25M314 436.5h1.25M314 437.5h1.25M315 435.5h1.25M315 436.5h1.25M315 438.5h1.25M316 433.5h1.25M316 435.5h1.25M316 436.5h1.25M317 434.5h1.25M317 435.5h1.25M317 436.5h1.25M317 437.5h1.25M318 434.5h1.25M318 435.5h1.25M318 437.5h1.25M318 438.5h1.25M319 434.5h1.25M319 436.5h1.25M319 437.5h1.25M319 438.5h1.25M320 434.5h1.25M320 435.5h1.25M320 437.5h1.25M321 434.5h1.25M321 435.5h1.25M321 436.5h1.25M322 434.5h1.25M322 435.5h1.25M322 436.5h1.25M322 437.5h1.25M322 438.5h1.25M323 432.5h1.25M323 433.5h1.25M323 435.5h1.25M323 436.5h1.25M323 437.5h1.25M323 438.5h1.25M324 433.5h1.25M324 434.5h1.25M324 435.5h1.25M324 436.5h1.25M324 437.5h1.25M325 434.5h1.25M325 436.5h1.25M325 437.5h1.25M326 432.5h1.25M326 435.5h1.25M326 436.5h1.25M326 437.5h1.25M327 433.5h1.25M327 434.5h1.25M327 435.5h1.25M327 436.5h1.25M327 438.5h1.25M328 434.5h1.25M328 436.5h1.25M328 437.5h1.25M329 433.5h1.25M329 435.5h1.25M329 436.5h1.25M329 437.5h1.25M330 434.5h1.25M330 435.5h1.25M330 436.5h1.25M330 437.5h1.25M331 435.5h1.25M331 436.5h1.25M331 437.5h1.25M332 437.5h1.25M333 434.5h1.25M333 435.5h1.25M333 436.5h1.25M333 437.5h1.25M333 438.5h1.25M334 435.5h1.25M334 436.5h1.25M334 437.5h1.25M335 432.5h1.25M335 433.5h1.25M335 436.5h1.25M335 438.5h1.25M336 434.5h1.25M336 435.5h1.25M336 436.5h1.25M336 437.5h1.25M336 438.5h1.25M337 433.5h1.25M337 434.5h1.25M337 435.5h1.25M337 436.5h1.25M337 437.5h1.25M338 433.5h1.25M338 434.5h1.25M338 435.5h1.25M338 436.5h1.25M338 437.5h1.25M339 434.5h1.25M339 435.5h1.25M339 436.5h1.25M340 434.5h1.25M340 435.5h1.25M340 436.5h1.25M341 433.5h1.25M341 435.5h1.25M341 438.5h1.25M342 434.5h1.25M342 435.5h1.25M342 436.5h1.25M342 437.5h1.25M343 435.5h1.25M343 436.5h1.25M343 437.5h1.25M344 435.5h1.25M344 437.5h1.25M344 438.5h1.25M345 435.5h1.25M345 436.5h1.25M345 437.5h1.25M346 435.5h1.25M346 436.5h1.25M346 438.5h1.25M347 435.5h1.25M347 436.5h1.25M347 437.5h1.25M348 434.5h1.25M348 435.5h1.25M348 436.5h1.25M348 437.5h1.25M349 437.5h1.25M350 435.5h1.25M350 437.5h1.25M351 434.5h1.25M351 435.5h1.25M351 436.5h1.25M351 438.5h1.25M352 434.5h1.25M352 435.5h1.25M352 436.5h1.25M352 437.5h1.25M352 438.5h1.25M353 435.5h1.25M353 436.5h1.25M353 437.5h1.25M354 435.5h1.25M354 436.5h1.25M354 437.5h1.25M354 439.5h1.25M355 435.5h1.25M355 436.5h1.25M356 434.5h1.25M356 436.5h1.25M356 437.5h1.25M357 436.5h1.25M358 436.5h1.25M359 434.5h1.25M359 435.5h1.25M359 436.5h1.25M360 435.5h1.25M360 437.5h1.25M361 435.5h1.25M363 435.5h1.25M363 436.5h1.25M364 437.5h1.25M365 436.5h1.25M366 435.5h1.25M366 436.5h1.25M367 433.5h1.25M367 435.5h1.25M367 436.5h1.25M367 437.5h1.25M368 435.5h1.25M368 436.5h1.25M369 433.5h1.25M369 434.5h1.25M369 435.5h1.25M369 436.5h1.25M369 437.5h1.25M370 436.5h1.25M371 434.5h1.25M371 435.5h1.25M371 436.5h1.25M371 437.5h1.25M372 434.5h1.25M372 435.5h1.25M372 438.5h1.25M373 436.5h1.25M374 435.5h1.25M374 436.5h1.25M374 437.5h1.25M375 434.5h1.25M375 435.5h1.25M375 436.5h1.25M375 437.5h1.25M376 435.5h1.25M376 437.5h1.25M376 439.5h1.25M377 435.5h1.25M377 436.5h1.25M378 433.5h1.25M378 434.5h1.25M378 435.5h1.25M378 436.5h1.25M378 438.5h1.25M379 437.5h1.25M379 438.5h1.25M380 434.5h1.25M380 435.5h1.25M380 436.5h1.25M380 439.5h1.25M381 433.5h1.25M381 436.5h1.25M381 437.5h1.25M382 433.5h1.25M382 435.5h1.25M382 436.5h1.25M382 437.5h1.25M383 434.5h1.25M383 435.5h1.25M383 436.5h1.25M383 437.5h1.25M384 436.5h1.25M385 436.5h1.25M385 437.5h1.25M386 435.5h1.25M386 436.5h1.25M387 435.5h1.25M387 436.5h1.25M387 438.5h1.25M388 433.5h1.25M388 434.5h1.25M388 435.5h1.25M388 436.5h1.25M388 437.5h1.25M389 434.5h1.25M389 436.5h1.25M389 437.5h1.25M390 434.5h1.25M390 436.5h1.25M390 437.5h1.25M391 434.5h1.25M391 435.5h1.25M391 436.5h1.25M392 436.5h1.25M393 432.5h1.25M393 435.5h1.25M393 437.5h1.25M394 435.5h1.25M394 436.5h1.25M395 436.5h1.25M396 436.5h1.25M397 434.5h1.25M397 435.5h1.25M397 436.5h1.25M398 431.5h1.25M398 435.5h1.25M398 437.5h1.25M399 434.5h1.25M399 435.5h1.25M399 436.5h1.25M399 437.5h1.25M400 434.5h1.25M400 435.5h1.25M400 438.5h1.25M401 435.5h1.25M401 436.5h1.25M402 435.5h1.25M402 436.5h1.25M403 436.5h1.25M403 438.5h1.25M404 434.5h1.25M404 436.5h1.25M405 434.5h1.25M405 435.5h1.25M405 437.5h1.25M405 438.5h1.25M406 437.5h1.25M407 434.5h1.25M407 435.5h1.25M408 435.5h1.25M408 436.5h1.25M408 437.5h1.25M409 435.5h1.25M409 436.5h1.25M409 438.5h1.25M410 435.5h1.25M410 436.5h1.25M410 437.5h1.25M410 438.5h1.25M411 436.5h1.25M411 438.5h1.25M412 434.5h1.25M412 435.5h1.25M412 436.5h1.25M413 435.5h1.25M413 437.5h1.25M414 433.5h1.25M414 434.5h1.25M414 436.5h1.25M415 435.5h1.25M415 438.5h1.25M416 434.5h1.25M416 435.5h1.25M416 436.5h1.25M417 434.5h1.25M417 435.5h1.25M417 436.5h1.25M417 437.5h1.25M418 433.5h1.25M418 435.5h1.25M418 436.5h1.25M419 434.5h1.25M419 435.5h1.25M419 436.5h1.25M419 437.5h1.25M420 437.5h1.25M421 435.5h1.25M422 435.5h1.25M422 436.5h1.25M423 435.5h1.25M423 438.5h1.25M424 435.5h1.25M424 437.5h1.25M424 438.5h1.25M425 434.5h1.25M425 435.5h1.25M425 437.5h1.25M426 434.5h1.25M426 436.5h1.25M427 436.5h1.25M427 437.5h1.25M428 434.5h1.25M428 436.5h1.25M428 437.5h1.25M428 438.5h1.25M429 436.5h1.25M429 437.5h1.25M430 433.5h1.25M430 434.5h1.25M430 435.5h1.25M430 436.5h1.25M431 434.5h1.25M431 435.5h1.25M431 437.5h1.25M431 438.5h1.25M432 434.5h1.25M432 435.5h1.25M432 436.5h1.25M432 437.5h1.25M433 433.5h1.25M433 435.5h1.25M433 436.5h1.25M433 437.5h1.25M433 439.5h1.25M434 435.5h1.25M434 436.5h1.25M434 437.5h1.25M435 433.5h1.25M436 434.5h1.25M436 436.5h1.25M437 435.5h1.25M437 437.5h1.25M438 435.5h1.25M438 436.5h1.25M439 438.5h1.25M440 434.5h1.25M440 435.5h1.25M440 436.5h1.25M440 437.5h1.25M441 434.5h1.25M441 435.5h1.25M441 436.5h1.25M442 436.5h1.25M442 438.5h1.25M442 439.5h1.25M443 435.5h1.25M443 436.5h1.25M443 437.5h1.25M443 438.5h1.25M444 433.5h1.25M444 434.5h1.25M444 435.5h1.25M444 436.5h1.25M445 434.5h1.25M445 435.5h1.25M445 437.5h1.25M445 438.5h1.25M446 435.5h1.25M446 436.5h1.25M446 438.5h1.25M447 435.5h1.25M447 436.5h1.25M448 434.5h1.25M448 435.5h1.25M448 436.5h1.25M448 437.5h1.25M449 433.5h1.25M449 436.5h1.25M449 437.5h1.25M450 436.5h1.25M450 437.5h1.25M450 438.5h1.25M451 434.5h1.25M451 437.5h1.25M452 434.5h1.25M452 435.5h1.25M452 436.5h1.25M452 437.5h1.25M453 434.5h1.25M453 435.5h1.25M453 436.5h1.25M453 439.5h1.25M454 434.5h1.25M454 435.5h1.25M454 436.5h1.25M454 438.5h1.25M455 435.5h1.25M456 434.5h1.25M456 436.5h1.25M457 435.5h1.25M458 435.5h1.25M458 436.5h1.25M458 437.5h1.25M459 436.5h1.25M459 437.5h1.25M460 434.5h1.25M460 435.5h1.25M460 438.5h1.25M460 439.5h1.25M461 434.5h1.25M461 436.5h1.25M462 436.5h1.25M462 437.5h1.25M462 438.5h1.25M463 435.5h1.25M463 437.5h1.25M463 438.5h1.25M464 437.5h1.25M464 438.5h1.25M464 439.5h1.25M465 438.5h1.25M466 435.5h1.25M466 436.5h1.25M468 437.5h1.25M470 435.5h1.25M473 436.5h1.25M475 433.5h1.25M475 437.5h1.25M477 435.5h1.25M478 437.5h1.25M479 434.5h1.25M479 435.5h1.25M480 434.5h1.25M481 434.5h1.25M482 435.5h1.25M483 435.5h1.25M484 435.5h1.25M485 434.5h1.25M485 436.5h1.25M486 437.5h1.25M487 433.5h1.25M487 435.5h1.25M488 434.5h1.25M489 434.5h1.25M489 437.5h1.25M490 434.5h1.25M491 433.5h1.25M494 434.5h1.25M495 435.5h1.25M496 434.5h1.25M496 435.5h1.25M496 436.5h1.25M497 433.5h1.25M498 434.5h1.25M498 436.5h1.25M499 435.5h1.25M499 436.5h1.25M500 437.5h1.25M501 433.5h1.25M502 436.5h1.25M504 434.5h1.25M504 436.5h1.25M507 437.5h1.25M508 438.5h1.25M510 435.5h1.25M515 434.5h1.25M516 435.5h1.25M517 434.5h1.25M517 436.5h1.25M518 435.5h1.25M520 435.5h1.25M520 436.5h1.25M520 437.5h1.25M520 438.5h1.25M521 436.5h1.25M521 440.5h1.25M523 436.5h1.25M524 436.5h1.25M524 437.5h1.25M526 433.5h1.25M527 435.5h1.25M529 436.5h1.25M531 437.5h1.25M532 436.5h1.25M534 436.5h1.25M535 436.5h1.25M536 435.5h1.25M537 435.5h1.25M538 433.5h1.25M538 437.5h1.25M539 433.5h1.25M541 435.5h1.25M541 437.5h1.25M541 438.5h1.25M542 436.5h1.25M544 434.5h1.25M547 435.5h1.25M548 436.5h1.25M552 436.5h1.25M555 436.5h1.25M562 434.5h1.25M563 433.5h1.25M566 436.5h1.25M567 435.5h1.25M573 434.5h1.25M574 437.5h1.25M575 435.5h1.25M575 437.5h1.25M577 435.5h1.25M577 437.5h1.25M578 436.5h1.25M581 438.5h1.25M585 436.5h1.25M587 436.5h1.25M587 438.5h1.25M588 436.5h1.25" stroke="#e62814" opacity="0.95"/>
<path d="M53 437.5h1.25M55 436.5h1.25M55 437.5h1.25M55 440.5h1.25M56 437.5h1.25M56 439.5h1.25M58 440.5h1.25M60 437.5h1.25M65 436.5h1.25M66 436.5h1.25M67 435.5h1.25M70 434.5h1.25M71 433.5h1.25M71 437.5h1.25M71 438.5h1.25M72 436.5h1.25M72 438.5h1.25M78 438.5h1.25M79 436.5h1.25M79 439.5h1.25M79 440.5h1.25M82 436.5h1.25M83 436.5h1.25M84 436.5h1.25M85 439.5h1.25M86 437.5h1.25M88 436.5h1.25M89 436.5h1.25M89 438.5h1.25M91 437.5h1.25M92 439.5h1.25M93 438.5h1.25M95 436.5h1.25M95 437.5h1.25M96 436.5h1.25M97 435.5h1.25M100 438.5h1.25M101 434.5h1.25M102 436.5h1.25M102 439.5h1.25M103 439.5h1.25M107 437.5h1.25M109 438.5h1.25M110 435.5h1.25M110 437.5h1.25M111 441.5h1.25M112 434.5h1.25M112 435.5h1.25M113 438.5h1.25M115 435.5h1.25M115 438.5h1.25M116 436.5h1.25M117 434.5h1.25M119 437.5h1.25M119 439.5h1.25M120 433.5h1.25M121 437.5h1.25M122 436.5h1.25M122 437.5h1.25M122 440.5h1.25M123 436.5h1.25M124 438.5h1.25M126 435.5h1.25M127 435.5h1.25M127 438.5h1.25M129 435.5h1.25M130 436.5h1.25M131 435.5h1.25M131 436.5h1.25M132 435.5h1.25M132 438.5h1.25M132 439.5h1.25M133 434.5h1.25M133 437.5h1.25M135 438.5h1.25M136 435.5h1.25M138 434.5h1.25M138 436.5h1.25M143 436.5h1.25M147 436.5h1.25M147 437.5h1.25M147 438.5h1.25M149 434.5h1.25M150 437.5h1.25M150 438.5h1.25M153 434.5h1.25M155 435.5h1.25M156 441.5h1.25M157 435.5h1.25M159 437.5h1.25M160 437.5h1.25M160 438.5h1.25M160 440.5h1.25M165 436.5h1.25M166 435.5h1.25M170 436.5h1.25M171 440.5h1.25M173 433.5h1.25M174 435.5h1.25M175 433.5h1.25M175 437.5h1.25M176 438.5h1.25M176 440.5h1.25M177 435.5h1.25M178 436.5h1.25M179 436.5h1.25M179 437.5h1.25M180 438.5h1.25M181 435.5h1.25M182 436.5h1.25M182 437.5h1.25M182 438.5h1.25M184 436.5h1.25M184 437.5h1.25M184 438.5h1.25M186 438.5h1.25M187 435.5h1.25M187 437.5h1.25M189 435.5h1.25M190 439.5h1.25M191 439.5h1.25M192 436.5h1.25M192 437.5h1.25M194 435.5h1.25M194 438.5h1.25M194 439.5h1.25M198 435.5h1.25M199 437.5h1.25M201 435.5h1.25M202 435.5h1.25M203 433.5h1.25M203 435.5h1.25M205 436.5h1.25M206 437.5h1.25M206 438.5h1.25M207 439.5h1.25M207 441.5h1.25M208 438.5h1.25M209 435.5h1.25M209 438.5h1.25M211 439.5h1.25M214 434.5h1.25M214 435.5h1.25M214 437.5h1.25M216 438.5h1.25M217 436.5h1.25M218 434.5h1.25M218 435.5h1.25M218 437.5h1.25M218 438.5h1.25M222 437.5h1.25M222 438.5h1.25M223 437.5h1.25M224 435.5h1.25M225 437.5h1.25M229 439.5h1.25M230 435.5h1.25M230 439.5h1.25M232 433.5h1.25M235 438.5h1.25M236 434.5h1.25M239 438.5h1.25M240 435.5h1.25M240 437.5h1.25M241 437.5h1.25M244 434.5h1.25M244 436.5h1.25M245 438.5h1.25M247 435.5h1.25M248 436.5h1.25M248 440.5h1.25M249 436.5h1.25M249 438.5h1.25M250 435.5h1.25M252 436.5h1.25M252 438.5h1.25M255 435.5h1.25M256 437.5h1.25M257 436.5h1.25M259 433.5h1.25M259 437.5h1.25M260 438.5h1.25M262 433.5h1.25M263 434.5h1.25M263 435.5h1.25M263 438.5h1.25M263 439.5h1.25M264 435.5h1.25M264 436.5h1.25M266 434.5h1.25M266 436.5h1.25M266 439.5h1.25M270 435.5h1.25M271 436.5h1.25M271 438.5h1.25M272 434.5h1.25M272 435.5h1.25M274 435.5h1.25M274 437.5h1.25M274 438.5h1.25M275 436.5h1.25M275 437.5h1.25M275 439.5h1.25M276 435.5h1.25M276 436.5h1.25M277 436.5h1.25M278 437.5h1.25M279 438.5h1.25M280 437.5h1.25M280 439.5h1.25M282 436.5h1.25M282 437.5h1.25M282 438.5h1.25M283 435.5h1.25M284 437.5h1.25M286 436.5h1.25M289 436.5h1.25M289 438.5h1.25M290 438.5h1.25M292 435.5h1.25M292 437.5h1.25M292 439.5h1.25M292 440.5h1.25M293 438.5h1.25M294 435.5h1.25M295 433.5h1.25M295 436.5h1.25M295 439.5h1.25M297 439.5h1.25M298 437.5h1.25M299 436.5h1.25M299 437.5h1.25M300 436.5h1.25M300 438.5h1.25M301 437.5h1.25M303 435.5h1.25M305 436.5h1.25M305 439.5h1.25M307 432.5h1.25M307 436.5h1.25M307 439.5h1.25M308 438.5h1.25M309 435.5h1.25M311 436.5h1.25M311 437.5h1.25M312 439.5h1.25M313 434.5h1.25M313 438.5h1.25M315 435.5h1.25M316 434.5h1.25M316 435.5h1.25M316 436.5h1.25M319 438.5h1.25M320 431.5h1.25M321 438.5h1.25M322 437.5h1.25M322 440.5h1.25M323 433.5h1.25M323 440.5h1.25M324 432.5h1.25M324 435.5h1.25M324 436.5h1.25M324 438.5h1.25M325 436.5h1.25M325 437.5h1.25M326 436.5h1.25M326 437.5h1.25M330 437.5h1.25M330 438.5h1.25M330 440.5h1.25M331 435.5h1.25M332 434.5h1.25M333 435.5h1.25M334 436.5h1.25M335 433.5h1.25M336 437.5h1.25M336 438.5h1.25M337 439.5h1.25M337 440.5h1.25M338 438.5h1.25M339 435.5h1.25M340 437.5h1.25M341 434.5h1.25M341 437.5h1.25M342 437.5h1.25M342 441.5h1.25M344 437.5h1.25M345 436.5h1.25M346 436.5h1.25M347 435.5h1.25M347 438.5h1.25M348 438.5h1.25M348 439.5h1.25M352 434.5h1.25M354 437.5h1.25M359 439.5h1.25M360 437.5h1.25M361 435.5h1.25M367 434.5h1.25M367 436.5h1.25M370 439.5h1.25M371 434.5h1.25M373 436.5h1.25M373 438.5h1.25M375 438.5h1.25M376 436.5h1.25M377 438.5h1.25M378 434.5h1.25M378 435.5h1.25M379 439.5h1.25M384 439.5h1.25M385 436.5h1.25M385 437.5h1.25M388 437.5h1.25M388 438.5h1.25M389 436.5h1.25M389 438.5h1.25M391 439.5h1.25M395 439.5h1.25M398 433.5h1.25M398 440.5h1.25M401 436.5h1.25M401 437.5h1.25M402 438.5h1.25M403 437.5h1.25M406 436.5h1.25M408 436.5h1.25M410 435.5h1.25M411 438.5h1.25M411 439.5h1.25M412 438.5h1.25M416 436.5h1.25M416 438.5h1.25M417 436.5h1.25M417 437.5h1.25M419 434.5h1.25M419 439.5h1.25M419 441.5h1.25M420 435.5h1.25M423 436.5h1.25M424 434.5h1.25M424 440.5h1.25M425 441.5h1.25M426 434.5h1.25M426 436.5h1.25M430 433.5h1.25M432 436.5h1.25M432 438.5h1.25M434 435.5h1.25M436 439.5h1.25M437 438.5h1.25M438 436.5h1.25M439 440.5h1.25M440 438.5h1.25M441 439.5h1.25M448 436.5h1.25M452 440.5h1.25M453 435.5h1.25M453 437.5h1.25M453 438.5h1.25M454 437.5h1.25M457 438.5h1.25M459 438.5h1.25M460 436.5h1.25M460 437.5h1.25M461 435.5h1.25M461 438.5h1.25M463 433.5h1.25M463 434.5h1.25M467 439.5h1.25M493 432.5h1.25M504 439.5h1.25M510 433.5h1.25M510 438.5h1.25M513 436.5h1.25M515 435.5h1.25M515 437.5h1.25M517 436.5h1.25M520 437.5h1.25M522 437.5h1.25M522 438.5h1.25M528 435.5h1.25M528 440.5h1.25M540 435.5h1.25M545 435.5h1.25M545 437.5h1.25M547 439.5h1.25M563 432.5h1.25M569 439.5h1.25M580 439.5h1.25M582 437.5h1.25M584 438.5h1.25" stroke="#f2d42a" opacity="0.95"/>
</g>
<g font-family="'Liberation Sans', Arial, sans-serif" font-size="10" fill="#444">
<text x="47.8" y="418.4" text-anchor="end">0.500</text>
<text x="47.8" y="388.7" text-anchor="end">1.00</text>
<text x="47.8" y="358.9" text-anchor="end">1.50</text>
<text x="47.8" y="329.2" text-anchor="end">2.00</text>
<text x="47.8" y="299.5" text-anchor="end">2.50</text>
<text x="47.8" y="269.8" text-anchor="end">3.00</text>
<text x="47.8" y="240.0" text-anchor="end">3.50</text>
<text x="47.8" y="210.3" text-anchor="end">4.00</text>
<text x="47.8" y="180.6" text-anchor="end">4.50</text>
<text x="47.8" y="150.8" text-anchor="end">5.00</text>
<text x="51.5" y="144">ms</text>
<text x="51.5" y="457.3" text-anchor="middle">0</text>
<text x="111.1" y="457.3" text-anchor="middle">400</text>
<text x="170.7" y="457.3" text-anchor="middle">800</text>
<text x="230.3" y="457.3" text-anchor="middle">1200</text>
<text x="289.9" y="457.3" text-anchor="middle">1600</text>
<text x="349.5" y="457.3" text-anchor="middle">2000</text>
<text x="409.1" y="457.3" text-anchor="middle">2400</text>
<text x="468.7" y="457.3" text-anchor="middle">2800</text>
<text x="528.3" y="457.3" text-anchor="middle">3200</text>
<text x="587.9" y="457.3" text-anchor="middle">3600</text>
<text x="647.2" y="457.3" text-anchor="middle">4000gB</text>
</g>
</svg>
<!-- right panel (absolute to body) -->
<div class="abs" style="left:683.8px;top:146px;width:80.6px;height:25.5px;border:1px solid #5b94cc;border-radius:4px;background:#fdfdfd;box-shadow:inset 0 0 0 1px #d8e6f4;"><span class="lbl" style="left:27.6px;top:4.9px">开始</span></div>
<div class="sep" style="top:186px"></div>
<div class="abs" style="left:680.5px;top:196.5px;width:5px;height:5px;border-radius:50%;border:3.5px solid #0f5db8;background:#fff"></div>
<div class="lbl" style="left:695.5px;top:195.5px">读取</div>
<div class="abs" style="left:680.5px;top:216.5px;width:10.4px;height:10.4px;border-radius:50%;border:0.8px solid #858585;background:#f6f6f6"></div>
<div class="lbl" style="left:695.5px;top:214.7px">写入</div>
<div class="sep" style="top:235px"></div>
<div class="abs" style="left:680.5px;top:247.5px;width:10.4px;height:10.4px;border-radius:3px;border:0.8px solid #858585;background:#f6f6f6"></div>
<div class="lbl" style="left:695.5px;top:247.1px">短行程</div>
<div class="abs" style="left:679.8px;top:269.6px;width:68px;height:23px;border:1px solid #dcdcdc;border-radius:2px;background:#f7f7f7"><span class="lbl" style="left:2.8px;top:2.5px;color:#9a9a9a">40</span>
  <div class="abs" style="left:53.5px;top:0;width:14.5px;height:23px;background:#f0f0f0;border-left:1px solid #e2e2e2"></div>
  <svg class="abs" style="left:54px;top:0" width="15" height="23" viewBox="0 0 15 23"><path d="M5 8.5L7.5 5.5L10 8.5ZM5 15L7.5 18L10 15Z" fill="#555"/><path d="M0 11.5H15" stroke="#dedede" stroke-width="1"/></svg>
</div>
<div class="lbl" style="left:763px;top:274.2px;font-size:12.3px">GB</div>
<div class="sep" style="top:306.5px"></div>
<div class="cb" style="left:680.5px;top:322.5px"><svg width="12" height="12" viewBox="0 0 12 12"><path d="M3 6.2L5.1 8.3L9.2 3.9" fill="none" stroke="#fff" stroke-width="1.2"/></svg></div>
<div class="lbl" style="left:695.5px;top:321.9px">4KB 对齐</div>
<!-- table -->
<div class="abs" style="left:40px;top:489px;width:582px;height:2px;background:#6c6c6c"></div>
<div class="abs" style="left:140.3px;top:471px;width:2px;height:129.5px;background:#707070"></div>
<div class="abs" style="left:263.3px;top:471px;width:2px;height:129.5px;background:#707070"></div>
<div class="abs" style="left:392.4px;top:471px;width:2px;height:129.5px;background:#707070"></div>
<div class="abs" style="left:514.8px;top:471px;width:2px;height:129.5px;background:#707070"></div>
<div class="hd" style="left:88px;top:468.4px">传输大小</div>
<div class="hd" style="left:205px;top:468.4px">操作/秒</div>
<div class="hd" style="left:326.6px;top:468.4px">平均访问时间</div>
<div class="hd" style="left:456.6px;top:468.4px">最大访问时间</div>
<div class="hd" style="left:575.5px;top:468.4px">平均速度</div>
<div class="sq" style="left:22px;top:500.9px;background:#f4ea1c"></div>
<div class="cb" style="left:40px;top:498.9px"><svg width="12" height="12" viewBox="0 0 12 12"><path d="M3 6.2L5.1 8.3L9.2 3.9" fill="none" stroke="#fff" stroke-width="1.2"/></svg></div>
<div class="lbl" style="left:55px;top:497.7px">512 字节</div>
<div class="val" style="left:124.0px;top:493.0px">8319 IOPS</div>
<div class="val" style="left:246.3px;top:493.0px">0.120 ms</div>
<div class="val" style="left:369.5px;top:493.0px">0.211 ms</div>
<div class="val" style="left:493.1px;top:493.0px">4.062 MB/s</div>
<div class="sq" style="left:22px;top:521.2px;background:#e01010"></div>
<div class="cb" style="left:40px;top:519.2px"><svg width="12" height="12" viewBox="0 0 12 12"><path d="M3 6.2L5.1 8.3L9.2 3.9" fill="none" stroke="#fff" stroke-width="1.2"/></svg></div>
<div class="lbl" style="left:55px;top:517.8px">4 KB</div>
<div class="val" style="left:124.0px;top:513.0px">8413 IOPS</div>
<div class="val" style="left:246.3px;top:513.0px">0.118 ms</div>
<div class="val" style="left:369.5px;top:513.0px">1.829 ms</div>
<div class="val" style="left:493.1px;top:513.0px">32.865 MB/s</div>
<div class="sq" style="left:22px;top:542.3px;background:#1fd01f"></div>
<div class="cb" style="left:40px;top:540.3px"><svg width="12" height="12" viewBox="0 0 12 12"><path d="M3 6.2L5.1 8.3L9.2 3.9" fill="none" stroke="#fff" stroke-width="1.2"/></svg></div>
<div class="lbl" style="left:55px;top:538.9px">64 KB</div>
<div class="val" style="left:124.0px;top:534.0px">4090 IOPS</div>
<div class="val" style="left:246.3px;top:534.0px">0.244 ms</div>
<div class="val" style="left:369.5px;top:534.0px">1.693 ms</div>
<div class="val" style="left:493.1px;top:534.0px">255.666 MB/s</div>
<div class="sq" style="left:22px;top:564.4px;background:#1c6fdc"></div>
<div class="cb" style="left:40px;top:562.4px"><svg width="12" height="12" viewBox="0 0 12 12"><path d="M3 6.2L5.1 8.3L9.2 3.9" fill="none" stroke="#fff" stroke-width="1.2"/></svg></div>
<div class="lbl" style="left:55px;top:561.0px">1 MB</div>
<div class="val" style="left:124.0px;top:556.0px">484 IOPS</div>
<div class="val" style="left:246.3px;top:556.0px">2.064 ms</div>
<div class="val" style="left:369.5px;top:556.0px">3.456 ms</div>
<div class="val" style="left:493.1px;top:556.0px">484.330 MB/s</div>
<div class="sq" style="left:22px;top:586.4px;background:#22e6e6"></div>
<div class="cb" style="left:40px;top:584.4px"><svg width="12" height="12" viewBox="0 0 12 12"><path d="M3 6.2L5.1 8.3L9.2 3.9" fill="none" stroke="#fff" stroke-width="1.2"/></svg></div>
<div class="lbl" style="left:55px;top:583.2px">随机</div>
<div class="val" style="left:124.0px;top:578.0px">882 IOPS</div>
<div class="val" style="left:246.3px;top:578.0px">1.133 ms</div>
<div class="val" style="left:369.5px;top:578.0px">4.071 ms</div>
<div class="val" style="left:493.1px;top:578.0px">447.720 MB/s</div>
</body>
</html>
